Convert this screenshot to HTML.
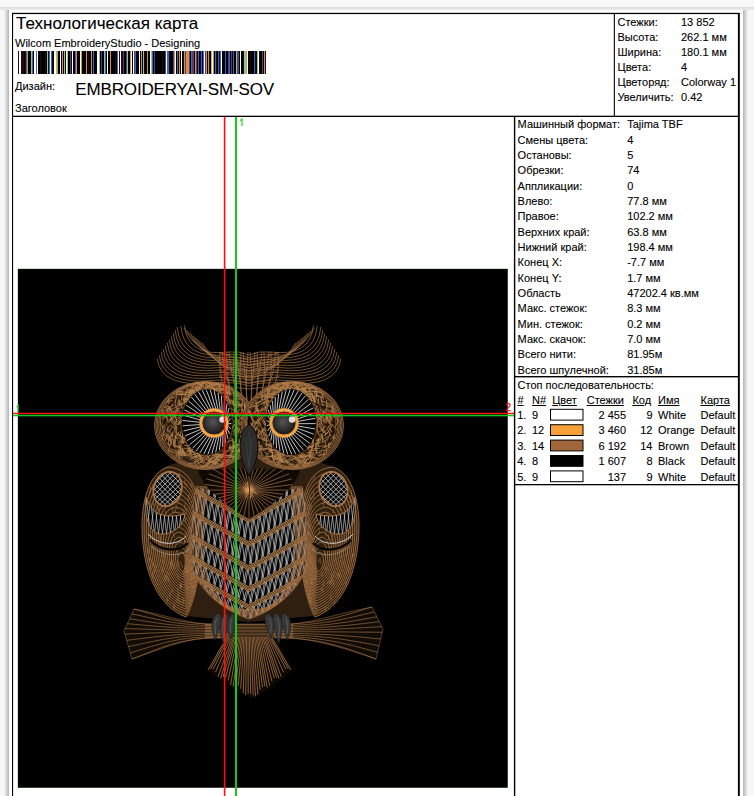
<!DOCTYPE html>
<html><head><meta charset="utf-8"><style>
html,body{margin:0;padding:0;}
body{width:754px;height:796px;overflow:hidden;background:#f7f7f7;position:relative;font-family:"Liberation Sans",sans-serif;}
.t{position:absolute;white-space:pre;color:#000;-webkit-text-stroke:0.1px #000;}
svg{position:absolute;left:0;top:0;}
</style></head><body>
<svg width="754" height="796" viewBox="0 0 754 796">
<defs>
<linearGradient id="shL" x1="0" x2="1" y1="0" y2="0"><stop offset="0" stop-color="#f7f7f7"/><stop offset="1" stop-color="#b4b4b4"/></linearGradient>
<linearGradient id="shR" x1="0" x2="1" y1="0" y2="0"><stop offset="0" stop-color="#b4b4b4"/><stop offset="1" stop-color="#f7f7f7"/></linearGradient>
<linearGradient id="shT" x1="0" x2="0" y1="0" y2="1"><stop offset="0" stop-color="#dcdcdc"/><stop offset="1" stop-color="#ececec"/></linearGradient>
</defs>
<rect x="0" y="7" width="754" height="3" fill="url(#shT)"/>
<rect x="4" y="10" width="5" height="786" fill="url(#shL)"/>
<rect x="743" y="10" width="5" height="786" fill="url(#shR)"/>
<rect x="9" y="10" width="734" height="786" fill="#fff"/>
<rect x="18" y="269" width="489.7" height="518.7" fill="#000" stroke="#203820" stroke-width="0.4"/>
<defs><radialGradient id="pupil" cx="0.45" cy="0.45" r="0.6"><stop offset="0" stop-color="#555"/><stop offset="1" stop-color="#151515"/></radialGradient></defs><g><path d="M134 609 C160 614 185 622 205 624 L293 624 C313 622 345 612 372 607 L383 629 L376 659 C350 650 318 640 293 638 L205 638 C182 640 158 650 132 659 L124 631Z" stroke="none" stroke-width="0" fill="#120c06" />
<path d="M134.0 609.0C164.0 616.8 175.0 624.5 230.0 624.5M372.0 607.0C342.0 615.8 323.0 624.5 268.0 624.5M205 624.5L293 624.5M131.8 613.9C161.8 619.9 175.0 625.9 230.0 625.9M374.4 611.9C344.4 618.9 323.0 625.9 268.0 625.9M205 625.9L293 625.9M129.6 618.8C159.6 623.1 175.0 627.4 230.0 627.4M376.9 616.8C346.9 622.1 323.0 627.4 268.0 627.4M205 627.4L293 627.4M127.3 623.7C157.3 626.2 175.0 628.8 230.0 628.8M379.3 621.7C349.3 625.2 323.0 628.8 268.0 628.8M205 628.8L293 628.8M125.1 628.6C155.1 629.4 175.0 630.3 230.0 630.3M381.8 626.6C351.8 628.4 323.0 630.3 268.0 630.3M205 630.3L293 630.3M124.9 634.1C154.9 632.9 175.0 631.7 230.0 631.7M382.2 632.3C352.2 632.0 323.0 631.7 268.0 631.7M205 631.7L293 631.7M126.7 640.3C156.7 636.8 175.0 633.2 230.0 633.2M380.7 639.0C350.7 636.1 323.0 633.2 268.0 633.2M205 633.2L293 633.2M128.4 646.6C158.4 640.6 175.0 634.6 230.0 634.6M379.1 645.7C349.1 640.1 323.0 634.6 268.0 634.6M205 634.6L293 634.6M130.2 652.8C160.2 644.4 175.0 636.1 230.0 636.1M377.6 652.3C347.6 644.2 323.0 636.1 268.0 636.1M205 636.1L293 636.1M132.0 659.0C162.0 648.2 175.0 637.5 230.0 637.5M376.0 659.0C346.0 648.2 323.0 637.5 268.0 637.5M205 637.5L293 637.5" stroke="#a87446" stroke-width="0.7" fill="none" opacity="0.9"/>
<path d="M134 609 C160 614 185 622 205 624 L293 624 C313 622 345 612 372 607 L383 629 L376 659 C350 650 318 640 293 638 L205 638 C182 640 158 650 132 659 L124 631Z" stroke="#a87446" stroke-width="0.6" fill="none" opacity="0.8" />
<path d="M226 637 L274 637 L293 668 C285 680 268 690 252 699 C236 690 218 680 208 670Z" stroke="none" stroke-width="0" fill="#0c0804" />
<path d="M227.0 637L208.0 670.0M228.3 637L210.5 668.8M229.6 637L213.0 669.3M230.9 637L215.5 672.1M232.3 637L218.1 676.6M233.6 637L220.6 678.3M234.9 637L223.1 677.1M236.2 637L225.6 677.6M237.5 637L228.1 680.4M238.8 637L230.6 684.9M240.1 637L233.1 686.6M241.5 637L235.7 685.4M242.8 637L238.2 685.9M244.1 637L240.7 688.7M245.4 637L243.2 693.2M246.7 637L245.7 694.9M248.0 637L248.2 693.7M249.3 637L250.7 694.2M250.7 637L253.2 695.3M252.0 637L255.5 696.3M253.3 637L257.9 694.6M254.6 637L260.2 690.0M255.9 637L262.5 687.0M257.2 637L264.9 686.4M258.5 637L267.2 687.5M259.9 637L269.6 685.7M261.2 637L271.9 681.1M262.5 637L274.3 678.2M263.8 637L276.6 677.6M265.1 637L278.9 678.6M266.4 637L281.3 676.9M267.7 637L283.6 672.3M269.1 637L286.0 669.3M270.4 637L288.3 668.7M271.7 637L290.7 669.8" stroke="#a87446" stroke-width="0.8" fill="none"/>
<path d="M249 458 C215 458 178 460 165 467 C148 478 143 510 145 535 C148 572 163 600 185 616 L249 622 L313 616 C335 600 351 572 353 535 C355 510 350 478 333 467 C320 460 283 458 249 458Z" stroke="none" stroke-width="0" fill="#2e1f10" />
<path d="M169.0 467.0C150.0 471.0 142.0 500.0 142.0 525.0C142.0 568.0 156.0 606.0 186.0 617.0C197.0 597.0 203.0 560.0 200.0 520.0C198.0 492.0 193.0 470.0 169.0 467.0" stroke="none" stroke-width="0" fill="#30200f" />
<clipPath id="wgL"><path d="M169.0 467.0C150.0 471.0 142.0 500.0 142.0 525.0C142.0 568.0 156.0 606.0 186.0 617.0C197.0 597.0 203.0 560.0 200.0 520.0C198.0 492.0 193.0 470.0 169.0 467.0"/></clipPath>
<path d="M169.0 467.0C150.0 471.0 142.0 500.0 142.0 525.0C142.0 568.0 156.0 606.0 186.0 617.0C197.0 597.0 203.0 560.0 200.0 520.0C198.0 492.0 193.0 470.0 169.0 467.0M169.7 472.0C151.7 475.8 144.1 503.3 144.1 527.0C144.1 567.8 157.4 603.9 185.8 614.3C196.3 595.4 202.0 560.3 199.1 522.3C197.2 495.7 192.5 474.9 169.7 472.0M170.4 477.0C153.4 480.6 146.2 506.6 146.2 529.1C146.2 567.7 158.8 601.8 185.7 611.7C195.6 593.7 201.0 560.5 198.3 524.6C196.5 499.5 192.0 479.7 170.4 477.0M171.1 482.0C155.1 485.4 148.3 510.0 148.3 531.1C148.3 567.5 160.1 599.7 185.5 609.0C194.9 592.1 199.9 560.8 197.4 526.9C195.7 503.2 191.5 484.6 171.1 482.0M171.9 487.0C156.7 490.2 150.4 513.3 150.4 533.2C150.4 567.4 161.5 597.6 185.4 606.4C194.1 590.5 198.9 561.0 196.5 529.2C194.9 506.9 191.0 489.4 171.9 487.0M172.6 492.0C158.4 495.0 152.5 516.6 152.5 535.2C152.5 567.2 162.9 595.5 185.2 603.7C193.4 588.8 197.9 561.3 195.7 531.5C194.2 510.7 190.4 494.3 172.6 492.0M173.3 497.1C160.1 499.8 154.6 519.9 154.6 537.3C154.6 567.1 164.3 593.4 185.1 601.1C192.7 587.2 196.9 561.5 194.8 533.8C193.4 514.4 189.9 499.1 173.3 497.1M174.0 502.1C161.8 504.6 156.7 523.3 156.7 539.3C156.7 566.9 165.7 591.3 184.9 598.4C192.0 585.6 195.8 561.8 193.9 536.1C192.6 518.1 189.4 504.0 174.0 502.1M174.7 507.1C163.5 509.4 158.8 526.6 158.8 541.4C158.8 566.8 167.0 589.2 184.8 595.7C191.3 583.9 194.8 562.0 193.0 538.4C191.9 521.8 188.9 508.8 174.7 507.1M175.4 512.1C165.2 514.2 160.9 529.9 160.9 543.4C160.9 566.6 168.4 587.1 184.6 593.1C190.6 582.3 193.8 562.3 192.2 540.7C191.1 525.6 188.4 513.7 175.4 512.1M176.2 517.1C166.9 519.0 163.0 533.2 163.0 545.4C163.0 566.5 169.8 585.0 184.5 590.4C189.8 580.6 192.8 562.6 191.3 543.0C190.3 529.3 187.9 518.6 176.2 517.1M176.9 522.1C168.6 523.8 165.1 536.5 165.1 547.5C165.1 566.3 171.2 582.9 184.3 587.8C189.1 579.0 191.8 562.8 190.4 545.3C189.6 533.0 187.4 523.4 176.9 522.1M177.6 527.1C170.2 528.7 167.1 539.9 167.1 549.5C167.1 566.2 172.6 580.9 184.2 585.1C188.4 577.4 190.7 563.1 189.6 547.6C188.8 536.8 186.9 528.3 177.6 527.1M178.3 532.1C171.9 533.5 169.2 543.2 169.2 551.6C169.2 566.0 173.9 578.8 184.0 582.4C187.7 575.7 189.7 563.3 188.7 549.9C188.0 540.5 186.4 533.1 178.3 532.1M179.0 537.1C173.6 538.3 171.3 546.5 171.3 553.6C171.3 565.9 175.3 576.7 183.9 579.8C187.0 574.1 188.7 563.6 187.8 552.2C187.3 544.2 185.8 538.0 179.0 537.1M179.7 542.1C175.3 543.1 173.4 549.8 173.4 555.7C173.4 565.7 176.7 574.6 183.7 577.1C186.3 572.5 187.7 563.8 187.0 554.5C186.5 548.0 185.3 542.8 179.7 542.1M180.4 547.1C177.0 547.9 175.5 553.2 175.5 557.7C175.5 565.5 178.1 572.5 183.5 574.5C185.6 570.8 186.6 564.1 186.1 556.8C185.7 551.7 184.8 547.7 180.4 547.1M181.2 552.2C178.7 552.7 177.6 556.5 177.6 559.8C177.6 565.4 179.5 570.4 183.4 571.8C184.8 569.2 185.6 564.3 185.2 559.1C185.0 555.4 184.3 552.5 181.2 552.2" stroke="#a87446" stroke-width="0.85" fill="none"/>
<path d="M175.8 503.8l1.1 5.3M150.5 558.9l2.8 5.7M159.4 506.8l-1.1 4.8M172.2 588.8l0.1 3.6M193.0 560.2l0.6 5.9M150.4 565.3l-0.3 5.4M148.6 512.8l-0.7 4.8M193.6 572.1l-0.2 6.7M189.4 526.1l1.1 6.7M158.5 489.3l-1.0 4.6M163.0 559.0l0.5 4.5M178.0 519.8l0.4 6.6M196.2 566.8l-0.9 6.9M155.6 565.3l-0.9 6.8M177.2 598.5l-0.1 3.8M177.4 588.1l0.9 3.1M199.5 591.3l2.5 5.7M155.0 528.3l1.6 5.9M149.4 557.3l-0.1 4.3M199.0 595.1l0.8 6.9M151.1 514.0l0.2 3.1M168.6 498.0l0.2 3.6M193.0 476.0l1.7 6.6M167.0 597.3l0.8 5.0M178.6 561.4l0.4 5.5M173.9 603.6l1.0 5.8M163.0 503.7l-1.1 5.0M147.6 547.9l1.0 5.2M179.6 472.8l0.1 3.2M171.7 559.1l-0.0 4.4M186.1 570.4l1.4 2.9M198.1 566.0l1.4 4.6M164.0 554.2l0.9 4.2M178.6 522.4l1.2 4.4M148.4 579.7l0.4 5.9M158.8 514.0l-0.4 3.9M170.1 496.6l-0.1 3.4M164.7 515.7l-0.5 4.7M181.5 517.8l-0.7 4.8M153.4 502.0l0.4 3.7M191.4 584.6l1.4 3.9M181.0 584.6l-0.4 4.4M162.5 488.4l-0.3 4.1M169.1 519.2l0.8 4.6M197.0 470.7l-1.0 6.9M197.4 531.7l-0.7 3.8M191.3 575.9l0.0 5.1M165.1 511.0l1.0 3.1M162.2 553.6l-0.3 3.2M183.8 598.3l-1.2 6.5M177.6 597.8l2.7 5.4M162.9 494.4l0.0 5.1M196.8 528.8l0.2 4.4M192.7 505.9l0.8 6.1M157.5 520.0l0.6 6.2M189.0 494.3l-1.1 6.1M192.7 559.3l1.7 3.7M174.9 508.1l0.9 4.8M147.1 580.3l1.5 3.2M150.6 487.7l-1.3 6.3M173.6 482.2l1.1 4.1M181.3 519.9l0.3 4.4M164.4 497.1l2.0 4.8M167.2 571.7l1.5 3.4M179.0 523.0l-0.3 4.5M180.0 583.8l0.8 4.4M184.3 540.5l1.0 5.7M160.0 535.4l0.6 5.8M169.5 480.2l1.1 6.4M166.8 603.0l-1.0 6.1M171.6 507.2l2.3 5.8M194.0 564.0l-0.5 5.7M176.9 574.2l2.1 4.9M149.3 580.0l1.3 3.1M191.6 473.3l2.4 5.9M191.3 565.6l-1.0 5.2M148.9 583.4l-0.3 5.0M152.7 571.6l-0.4 6.7M164.2 478.7l0.5 6.3M156.5 504.4l1.6 5.2M167.9 577.0l1.0 4.5M169.2 519.7l2.0 4.6M168.9 608.2l-0.2 3.6M187.1 568.1l-0.0 5.1M181.1 538.7l-0.6 3.6M186.7 483.6l-0.9 5.0M185.1 532.9l1.4 3.8M178.0 498.3l1.0 3.8M197.5 568.1l1.5 5.6M192.2 528.7l0.3 4.1M148.2 500.9l0.6 4.5M166.1 494.5l1.5 5.9M199.5 490.4l0.7 5.3M191.2 536.5l-0.5 5.2M185.2 538.3l-0.6 4.6M197.9 574.2l0.6 3.9M185.0 503.3l-0.0 6.8M160.7 496.9l1.9 5.5M194.7 591.9l1.9 6.2M169.4 514.5l-0.1 3.3M191.2 483.2l1.2 4.3M182.8 552.4l1.9 3.9M172.8 531.9l1.7 5.1M167.7 605.7l0.3 3.5M182.3 509.0l2.5 6.1M166.8 603.7l-0.4 6.0M182.8 512.0l0.1 6.2M187.0 507.7l-1.1 5.6M153.0 546.1l0.5 4.4M183.0 572.0l0.3 3.7M180.4 561.7l2.2 6.2M153.5 563.1l-0.6 3.5M185.2 517.1l0.3 5.2M171.3 561.9l0.9 3.6M184.9 479.7l-0.3 5.2M166.0 575.0l1.3 4.4M160.1 541.7l-0.3 4.4M168.4 517.3l0.6 6.1M191.9 520.1l1.6 3.8M153.0 484.2l-0.4 5.9M157.0 496.2l1.1 5.9M186.7 585.8l0.2 3.6M157.3 526.6l0.5 5.2M160.3 498.7l-0.2 3.1M194.2 584.0l-0.9 4.4M177.9 548.5l0.2 6.9M162.9 567.5l-0.6 4.9M185.5 555.4l2.7 5.4M173.1 564.0l0.5 4.8M175.1 497.5l2.2 4.5M170.5 561.7l0.5 6.8M180.0 582.5l1.9 4.0M151.1 503.1l0.6 6.7M193.1 515.9l-0.1 3.5M178.9 591.9l-1.0 5.8M165.2 575.0l-0.6 6.7M170.2 592.3l-0.3 4.9M149.3 485.5l1.5 3.5M173.3 492.8l-0.1 5.1" stroke="#b8854f" stroke-width="0.6" fill="none" opacity="0.8" clip-path="url(#wgL)"/>
<path d="M153.8 489.0a13.8 17.5 0 1 0 27.6 0a13.8 17.5 0 1 0 -27.6 0Z" fill="#050505" transform="rotate(18 167.6 489)"/>
<clipPath id="ovL"><path d="M153.8 489.0a13.8 17.5 0 1 0 27.6 0a13.8 17.5 0 1 0 -27.6 0Z" transform="rotate(18 167.6 489)"/></clipPath>
<path d="M114.4 469.0Q134.4 491.0 158.4 513.0M158.4 469.0Q138.4 491.0 114.4 513.0M119.6 469.0Q139.6 491.0 163.6 513.0M163.6 469.0Q143.6 491.0 119.6 513.0M124.8 469.0Q144.8 491.0 168.8 513.0M168.8 469.0Q148.8 491.0 124.8 513.0M130.0 469.0Q150.0 491.0 174.0 513.0M174.0 469.0Q154.0 491.0 130.0 513.0M135.2 469.0Q155.2 491.0 179.2 513.0M179.2 469.0Q159.2 491.0 135.2 513.0M140.4 469.0Q160.4 491.0 184.4 513.0M184.4 469.0Q164.4 491.0 140.4 513.0M145.6 469.0Q165.6 491.0 189.6 513.0M189.6 469.0Q169.6 491.0 145.6 513.0M150.8 469.0Q170.8 491.0 194.8 513.0M194.8 469.0Q174.8 491.0 150.8 513.0M156.0 469.0Q176.0 491.0 200.0 513.0M200.0 469.0Q180.0 491.0 156.0 513.0M161.2 469.0Q181.2 491.0 205.2 513.0M205.2 469.0Q185.2 491.0 161.2 513.0M166.4 469.0Q186.4 491.0 210.4 513.0M210.4 469.0Q190.4 491.0 166.4 513.0M171.6 469.0Q191.6 491.0 215.6 513.0M215.6 469.0Q195.6 491.0 171.6 513.0M176.8 469.0Q196.8 491.0 220.8 513.0M220.8 469.0Q200.8 491.0 176.8 513.0" stroke="#dadada" stroke-width="0.75" fill="none" clip-path="url(#ovL)"/>
<path d="M153.8 489.0a13.8 17.5 0 1 0 27.6 0a13.8 17.5 0 1 0 -27.6 0Z" fill="none" stroke="#a87446" stroke-width="1.8" transform="rotate(18 167.6 489)"/>
<path d="M146 497 C149 512 163 520 185 514 C184 524 175 535 160 534 C150 532 144 520 146 497Z" stroke="none" stroke-width="0" fill="#050505" />
<clipPath id="crL"><path d="M146 497 C149 512 163 520 185 514 C184 524 175 535 160 534 C150 532 144 520 146 497Z"/></clipPath>
<path d="M142.0 496L147.0 538M147.0 496L142.0 538M146.0 496L151.0 538M151.0 496L146.0 538M150.0 496L155.0 538M155.0 496L150.0 538M154.0 496L159.0 538M159.0 496L154.0 538M158.0 496L163.0 538M163.0 496L158.0 538M162.0 496L167.0 538M167.0 496L162.0 538M166.0 496L171.0 538M171.0 496L166.0 538M170.0 496L175.0 538M175.0 496L170.0 538M174.0 496L179.0 538M179.0 496L174.0 538M178.0 496L183.0 538M183.0 496L178.0 538M182.0 496L187.0 538M187.0 496L182.0 538M186.0 496L191.0 538M191.0 496L186.0 538" stroke="#d0d0d0" stroke-width="0.65" fill="none" clip-path="url(#crL)"/>
<path d="M146 497 C149 512 163 520 185 514 C184 524 175 535 160 534 C150 532 144 520 146 497Z" stroke="#a87446" stroke-width="1.0" fill="none"/>
<path d="M148.0 534 C158.0 545 176.0 547 186.0 536" stroke="#dddddd" stroke-width="1.0" fill="none" opacity="0.9"/>
<path d="M150.0 540 C160.0 551 178.0 553 188.0 543" stroke="#080808" stroke-width="2.4" fill="none"/>
<path d="M151.0 546 C162.0 556 180.0 558 189.0 549" stroke="#b0b0b0" stroke-width="0.7" fill="none" opacity="0.8"/>
<path d="M332.0 467.0C351.0 471.0 359.0 500.0 359.0 525.0C359.0 568.0 345.0 606.0 315.0 617.0C304.0 597.0 298.0 560.0 301.0 520.0C303.0 492.0 308.0 470.0 332.0 467.0" stroke="none" stroke-width="0" fill="#30200f" />
<clipPath id="wgR"><path d="M332.0 467.0C351.0 471.0 359.0 500.0 359.0 525.0C359.0 568.0 345.0 606.0 315.0 617.0C304.0 597.0 298.0 560.0 301.0 520.0C303.0 492.0 308.0 470.0 332.0 467.0"/></clipPath>
<path d="M332.0 467.0C351.0 471.0 359.0 500.0 359.0 525.0C359.0 568.0 345.0 606.0 315.0 617.0C304.0 597.0 298.0 560.0 301.0 520.0C303.0 492.0 308.0 470.0 332.0 467.0M331.3 472.0C349.3 475.8 356.9 503.3 356.9 527.0C356.9 567.8 343.6 603.9 315.2 614.3C304.7 595.4 299.0 560.3 301.9 522.3C303.8 495.7 308.5 474.9 331.3 472.0M330.6 477.0C347.6 480.6 354.8 506.6 354.8 529.1C354.8 567.7 342.2 601.8 315.3 611.7C305.4 593.7 300.0 560.5 302.7 524.6C304.5 499.5 309.0 479.7 330.6 477.0M329.9 482.0C345.9 485.4 352.7 510.0 352.7 531.1C352.7 567.5 340.9 599.7 315.5 609.0C306.1 592.1 301.1 560.8 303.6 526.9C305.3 503.2 309.5 484.6 329.9 482.0M329.1 487.0C344.3 490.2 350.6 513.3 350.6 533.2C350.6 567.4 339.5 597.6 315.6 606.4C306.9 590.5 302.1 561.0 304.5 529.2C306.1 506.9 310.0 489.4 329.1 487.0M328.4 492.0C342.6 495.0 348.5 516.6 348.5 535.2C348.5 567.2 338.1 595.5 315.8 603.7C307.6 588.8 303.1 561.3 305.3 531.5C306.8 510.7 310.6 494.3 328.4 492.0M327.7 497.1C340.9 499.8 346.4 519.9 346.4 537.3C346.4 567.1 336.7 593.4 315.9 601.1C308.3 587.2 304.1 561.5 306.2 533.8C307.6 514.4 311.1 499.1 327.7 497.1M327.0 502.1C339.2 504.6 344.3 523.3 344.3 539.3C344.3 566.9 335.3 591.3 316.1 598.4C309.0 585.6 305.2 561.8 307.1 536.1C308.4 518.1 311.6 504.0 327.0 502.1M326.3 507.1C337.5 509.4 342.2 526.6 342.2 541.4C342.2 566.8 334.0 589.2 316.2 595.7C309.7 583.9 306.2 562.0 308.0 538.4C309.1 521.8 312.1 508.8 326.3 507.1M325.6 512.1C335.8 514.2 340.1 529.9 340.1 543.4C340.1 566.6 332.6 587.1 316.4 593.1C310.4 582.3 307.2 562.3 308.8 540.7C309.9 525.6 312.6 513.7 325.6 512.1M324.8 517.1C334.1 519.0 338.0 533.2 338.0 545.4C338.0 566.5 331.2 585.0 316.5 590.4C311.2 580.6 308.2 562.6 309.7 543.0C310.7 529.3 313.1 518.6 324.8 517.1M324.1 522.1C332.4 523.8 335.9 536.5 335.9 547.5C335.9 566.3 329.8 582.9 316.7 587.8C311.9 579.0 309.2 562.8 310.6 545.3C311.4 533.0 313.6 523.4 324.1 522.1M323.4 527.1C330.8 528.7 333.9 539.9 333.9 549.5C333.9 566.2 328.4 580.9 316.8 585.1C312.6 577.4 310.3 563.1 311.4 547.6C312.2 536.8 314.1 528.3 323.4 527.1M322.7 532.1C329.1 533.5 331.8 543.2 331.8 551.6C331.8 566.0 327.1 578.8 317.0 582.4C313.3 575.7 311.3 563.3 312.3 549.9C313.0 540.5 314.6 533.1 322.7 532.1M322.0 537.1C327.4 538.3 329.7 546.5 329.7 553.6C329.7 565.9 325.7 576.7 317.1 579.8C314.0 574.1 312.3 563.6 313.2 552.2C313.7 544.2 315.2 538.0 322.0 537.1M321.3 542.1C325.7 543.1 327.6 549.8 327.6 555.7C327.6 565.7 324.3 574.6 317.3 577.1C314.7 572.5 313.3 563.8 314.0 554.5C314.5 548.0 315.7 542.8 321.3 542.1M320.6 547.1C324.0 547.9 325.5 553.2 325.5 557.7C325.5 565.5 322.9 572.5 317.5 574.5C315.4 570.8 314.4 564.1 314.9 556.8C315.3 551.7 316.2 547.7 320.6 547.1M319.8 552.2C322.3 552.7 323.4 556.5 323.4 559.8C323.4 565.4 321.5 570.4 317.6 571.8C316.2 569.2 315.4 564.3 315.8 559.1C316.0 555.4 316.7 552.5 319.8 552.2" stroke="#a87446" stroke-width="0.85" fill="none"/>
<path d="M319.6 529.9l-1.2 4.7M332.7 577.5l-2.2 6.2M334.6 572.2l-1.1 5.0M342.1 554.7l-1.7 3.4M346.4 581.2l-0.6 3.7M344.9 499.7l-0.7 3.6M328.0 493.9l-1.3 2.8M332.4 533.6l0.1 3.2M333.0 527.3l-3.0 6.2M349.0 501.1l-0.5 3.6M335.6 558.4l-1.2 3.0M339.4 573.3l0.4 4.8M339.9 505.5l0.5 5.5M349.0 519.0l0.0 6.9M353.8 554.1l-1.5 3.0M352.1 494.2l-2.4 5.1M328.7 608.3l0.6 6.6M321.8 513.3l0.6 3.3M309.0 511.7l-1.7 4.2M318.0 517.5l0.7 3.6M315.1 575.1l0.6 5.2M334.8 601.1l-0.7 3.9M328.5 580.7l-1.0 3.5M321.9 572.3l0.1 4.5M345.8 539.2l0.1 3.1M313.8 536.3l0.0 3.4M309.3 503.7l-0.1 6.5M330.2 593.9l0.9 5.9M334.4 517.4l-1.9 4.2M348.2 550.8l-2.3 5.1M351.4 504.2l-2.0 5.2M353.4 553.1l-2.1 6.5M324.2 501.3l-1.1 6.0M312.2 555.8l-0.4 3.7M349.8 495.2l0.4 3.4M302.8 473.4l-2.1 6.2M329.3 482.2l-2.0 6.0M320.0 557.4l0.4 6.5M322.0 519.1l-0.5 3.4M322.5 588.6l0.4 3.8M329.4 546.6l0.1 3.3M328.3 519.2l-2.1 4.8M331.6 574.4l-0.1 5.4M335.4 500.4l1.0 4.2M349.5 531.2l-1.1 3.5M315.5 602.2l1.0 6.9M304.6 556.9l-0.4 4.7M306.1 604.6l1.0 4.8M332.4 579.8l1.5 6.5M304.5 511.5l-1.1 3.2M338.4 572.6l-0.6 5.5M314.5 475.8l-1.3 4.5M314.7 519.0l0.2 4.1M338.1 484.7l-0.6 3.3M313.6 491.8l0.1 6.9M307.6 609.1l-0.8 3.6M329.5 514.3l-0.5 5.1M308.8 521.1l-1.3 4.7M311.2 595.9l-1.0 3.8M353.5 584.5l-1.9 4.8M345.2 546.1l-1.6 3.5M329.3 579.3l1.3 6.0M353.3 496.3l-0.7 4.3M325.1 477.3l-1.7 3.9M311.5 505.1l-0.7 4.0M331.2 476.2l-0.2 5.7M311.1 599.6l-1.0 3.4M312.2 577.7l-0.7 6.3M339.2 548.4l-1.1 2.9M306.5 561.3l0.8 4.8M304.8 564.5l0.5 5.4M326.5 528.8l-1.3 3.5M301.4 567.1l-0.4 4.6M329.9 520.0l0.4 4.8M326.3 514.7l-1.2 6.3M304.6 587.5l-0.1 3.1M324.9 551.6l-0.5 4.1M305.7 570.7l-2.2 5.2M326.7 522.7l1.1 6.8M343.7 561.4l0.6 3.7M310.1 524.4l-1.0 4.0M304.0 604.9l-1.1 4.4M347.0 510.0l-2.0 6.6M341.8 481.3l-1.1 3.1M314.6 544.7l0.6 5.5M303.1 510.1l-1.7 3.7M339.8 538.6l-0.3 3.2M303.2 503.5l-2.4 6.2M301.4 495.3l0.0 5.6M351.1 490.2l0.2 3.7M310.4 496.9l0.5 3.2M325.7 606.4l-0.7 3.4M301.7 525.4l-1.0 3.4M347.3 490.6l-1.5 6.5M343.8 480.9l1.3 6.9M303.6 520.3l-0.8 5.8M352.9 514.5l-1.4 5.8M323.8 581.0l-0.7 5.1M325.7 532.8l0.4 3.8M304.6 554.4l0.5 3.7M309.5 606.8l-1.4 3.8M351.2 498.7l1.0 4.5M307.9 472.0l0.6 6.9M326.2 567.3l0.2 3.4M330.6 546.7l-1.9 5.0M327.2 515.9l-0.9 4.2M322.1 520.9l1.4 6.6M309.7 592.4l-1.8 6.7M347.5 508.3l-0.7 5.9M319.8 518.4l-1.9 6.6M328.7 534.3l-0.6 6.5M326.0 610.1l-0.9 5.4M331.4 479.8l0.7 6.1M308.7 478.4l-1.4 6.8M342.6 522.1l-0.6 6.5M308.0 531.2l0.1 4.4M327.2 512.7l-0.9 4.4M307.6 562.5l-0.2 3.6M334.3 501.2l-0.1 3.6M337.0 481.6l-0.8 3.0M305.2 546.5l-0.6 5.9M309.6 587.6l0.8 4.7M347.6 566.9l0.7 4.5M306.8 537.5l-1.0 3.6M322.3 586.9l-1.2 2.9M353.6 519.9l0.4 3.7M333.4 508.9l-0.5 4.7M319.0 559.3l-0.6 3.3M317.4 609.0l-1.9 4.4M301.4 577.0l-1.3 2.8M331.6 538.2l1.0 6.2M331.8 517.1l-0.4 6.5M333.2 498.7l-2.2 5.1M304.4 473.8l-0.6 5.3M341.7 482.1l-0.9 6.4M338.9 546.5l1.2 5.5M343.3 545.0l-1.7 6.4M325.8 488.9l-0.2 4.4M305.8 579.2l0.8 5.9M350.8 498.9l-0.7 4.2" stroke="#b8854f" stroke-width="0.6" fill="none" opacity="0.8" clip-path="url(#wgR)"/>
<path d="M319.6 489.0a13.8 17.5 0 1 0 27.6 0a13.8 17.5 0 1 0 -27.6 0Z" fill="#050505" transform="rotate(-18 333.4 489)"/>
<clipPath id="ovR"><path d="M319.6 489.0a13.8 17.5 0 1 0 27.6 0a13.8 17.5 0 1 0 -27.6 0Z" transform="rotate(-18 333.4 489)"/></clipPath>
<path d="M280.2 469.0Q300.2 491.0 324.2 513.0M324.2 469.0Q304.2 491.0 280.2 513.0M285.4 469.0Q305.4 491.0 329.4 513.0M329.4 469.0Q309.4 491.0 285.4 513.0M290.6 469.0Q310.6 491.0 334.6 513.0M334.6 469.0Q314.6 491.0 290.6 513.0M295.8 469.0Q315.8 491.0 339.8 513.0M339.8 469.0Q319.8 491.0 295.8 513.0M301.0 469.0Q321.0 491.0 345.0 513.0M345.0 469.0Q325.0 491.0 301.0 513.0M306.2 469.0Q326.2 491.0 350.2 513.0M350.2 469.0Q330.2 491.0 306.2 513.0M311.4 469.0Q331.4 491.0 355.4 513.0M355.4 469.0Q335.4 491.0 311.4 513.0M316.6 469.0Q336.6 491.0 360.6 513.0M360.6 469.0Q340.6 491.0 316.6 513.0M321.8 469.0Q341.8 491.0 365.8 513.0M365.8 469.0Q345.8 491.0 321.8 513.0M327.0 469.0Q347.0 491.0 371.0 513.0M371.0 469.0Q351.0 491.0 327.0 513.0M332.2 469.0Q352.2 491.0 376.2 513.0M376.2 469.0Q356.2 491.0 332.2 513.0M337.4 469.0Q357.4 491.0 381.4 513.0M381.4 469.0Q361.4 491.0 337.4 513.0M342.6 469.0Q362.6 491.0 386.6 513.0M386.6 469.0Q366.6 491.0 342.6 513.0" stroke="#dadada" stroke-width="0.75" fill="none" clip-path="url(#ovR)"/>
<path d="M319.6 489.0a13.8 17.5 0 1 0 27.6 0a13.8 17.5 0 1 0 -27.6 0Z" fill="none" stroke="#a87446" stroke-width="1.8" transform="rotate(-18 333.4 489)"/>
<path d="M 355.0 497.0 C 352.0 512.0 338.0 520.0 316.0 514.0 C 317.0 524.0 326.0 535.0 341.0 534.0 C 351.0 532.0 357.0 520.0 355.0 497.0 Z" stroke="none" stroke-width="0" fill="#050505" />
<clipPath id="crR"><path d="M 355.0 497.0 C 352.0 512.0 338.0 520.0 316.0 514.0 C 317.0 524.0 326.0 535.0 341.0 534.0 C 351.0 532.0 357.0 520.0 355.0 497.0 Z"/></clipPath>
<path d="M359.0 496L354.0 538M354.0 496L359.0 538M355.0 496L350.0 538M350.0 496L355.0 538M351.0 496L346.0 538M346.0 496L351.0 538M347.0 496L342.0 538M342.0 496L347.0 538M343.0 496L338.0 538M338.0 496L343.0 538M339.0 496L334.0 538M334.0 496L339.0 538M335.0 496L330.0 538M330.0 496L335.0 538M331.0 496L326.0 538M326.0 496L331.0 538M327.0 496L322.0 538M322.0 496L327.0 538M323.0 496L318.0 538M318.0 496L323.0 538M319.0 496L314.0 538M314.0 496L319.0 538M315.0 496L310.0 538M310.0 496L315.0 538" stroke="#d0d0d0" stroke-width="0.65" fill="none" clip-path="url(#crR)"/>
<path d="M 355.0 497.0 C 352.0 512.0 338.0 520.0 316.0 514.0 C 317.0 524.0 326.0 535.0 341.0 534.0 C 351.0 532.0 357.0 520.0 355.0 497.0 Z" stroke="#a87446" stroke-width="1.0" fill="none"/>
<path d="M353.0 534 C343.0 545 325.0 547 315.0 536" stroke="#dddddd" stroke-width="1.0" fill="none" opacity="0.9"/>
<path d="M351.0 540 C341.0 551 323.0 553 313.0 543" stroke="#080808" stroke-width="2.4" fill="none"/>
<path d="M350.0 546 C339.0 556 321.0 558 312.0 549" stroke="#b0b0b0" stroke-width="0.7" fill="none" opacity="0.8"/>
<path d="M196 488 C220 490 235 498 249 503 C263 498 278 490 303 488 C308 520 308 555 304 572 C294 595 272 610 249 619 C226 610 204 595 194 572 C190 555 190 520 196 488Z" stroke="none" stroke-width="0" fill="#050505" />
<clipPath id="shield"><path d="M196 488 C220 490 235 498 249 503 C263 498 278 490 303 488 C308 520 308 555 304 572 C294 595 272 610 249 619 C226 610 204 595 194 572 C190 555 190 520 196 488Z"/></clipPath>
<path d="M188.0 462.4L191.0 485.1L194.0 465.8M189.5 483.4L192.5 465.8M194.0 465.8L197.0 488.4L200.0 469.1M195.5 486.8L198.5 469.1M200.0 469.1L203.0 491.7L206.0 472.4M201.5 490.1L204.5 472.4M206.0 472.4L209.0 495.0L212.0 475.6M207.5 493.4L210.5 475.6M212.0 475.6L215.0 498.3L218.0 478.9M213.5 496.6L216.5 478.9M218.0 478.9L221.0 501.6L224.0 482.2M219.5 499.9L222.5 482.2M224.0 482.2L227.0 504.9L230.0 485.6M225.5 503.2L228.5 485.6M230.0 485.6L233.0 508.2L236.0 488.9M231.5 506.6L234.5 488.9M236.0 488.9L239.0 511.5L242.0 492.1M237.5 509.9L240.5 492.1M242.0 492.1L245.0 514.8L248.0 495.4M243.5 513.1L246.5 495.4M248.0 495.4L251.0 515.9L254.0 493.2M249.5 516.5L252.5 493.2M254.0 493.2L257.0 512.6L260.0 489.9M255.5 514.2L258.5 489.9M260.0 489.9L263.0 509.3L266.0 486.6M261.5 510.9L264.5 486.6M266.0 486.6L269.0 506.0L272.0 483.4M267.5 507.6L270.5 483.4M272.0 483.4L275.0 502.7L278.0 480.1M273.5 504.4L276.5 480.1M278.0 480.1L281.0 499.4L284.0 476.8M279.5 501.1L282.5 476.8M284.0 476.8L287.0 496.1L290.0 473.4M285.5 497.8L288.5 473.4M290.0 473.4L293.0 492.8L296.0 470.1M291.5 494.4L294.5 470.1M296.0 470.1L299.0 489.5L302.0 466.9M297.5 491.1L300.5 466.9M302.0 466.9L305.0 486.2L308.0 463.6M303.5 487.9L306.5 463.6M308.0 463.6L311.0 482.9L314.0 460.2M309.5 484.6L312.5 460.2M188.0 488.4L191.0 509.1L194.0 491.8M189.5 507.4L192.5 491.8M194.0 491.8L197.0 512.4L200.0 495.1M195.5 510.8L198.5 495.1M200.0 495.1L203.0 515.7L206.0 498.4M201.5 514.0L204.5 498.4M206.0 498.4L209.0 519.0L212.0 501.6M207.5 517.4L210.5 501.6M212.0 501.6L215.0 522.3L218.0 504.9M213.5 520.6L216.5 504.9M218.0 504.9L221.0 525.6L224.0 508.2M219.5 524.0L222.5 508.2M224.0 508.2L227.0 528.9L230.0 511.6M225.5 527.2L228.5 511.6M230.0 511.6L233.0 532.2L236.0 514.9M231.5 530.5L234.5 514.9M236.0 514.9L239.0 535.5L242.0 518.1M237.5 533.9L240.5 518.1M242.0 518.1L245.0 538.8L248.0 521.5M243.5 537.1L246.5 521.5M248.0 521.5L251.0 539.9L254.0 519.2M249.5 540.5L252.5 519.2M254.0 519.2L257.0 536.6L260.0 516.0M255.5 538.2L258.5 516.0M260.0 516.0L263.0 533.3L266.0 512.6M261.5 535.0L264.5 512.6M266.0 512.6L269.0 530.0L272.0 509.4M267.5 531.6L270.5 509.4M272.0 509.4L275.0 526.7L278.0 506.1M273.5 528.4L276.5 506.1M278.0 506.1L281.0 523.4L284.0 502.8M279.5 525.0L282.5 502.8M284.0 502.8L287.0 520.1L290.0 499.4M285.5 521.8L288.5 499.4M290.0 499.4L293.0 516.8L296.0 496.1M291.5 518.5L294.5 496.1M296.0 496.1L299.0 513.5L302.0 492.9M297.5 515.1L300.5 492.9M302.0 492.9L305.0 510.2L308.0 489.6M303.5 511.9L306.5 489.6M308.0 489.6L311.0 506.9L314.0 486.2M309.5 508.6L312.5 486.2M188.0 512.5L191.0 533.1L194.0 515.8M189.5 531.5L192.5 515.8M194.0 515.8L197.0 536.4L200.0 519.0M195.5 534.8L198.5 519.0M200.0 519.0L203.0 539.7L206.0 522.4M201.5 538.0L204.5 522.4M206.0 522.4L209.0 543.0L212.0 525.6M207.5 541.4L210.5 525.6M212.0 525.6L215.0 546.3L218.0 529.0M213.5 544.6L216.5 529.0M218.0 529.0L221.0 549.6L224.0 532.2M219.5 548.0L222.5 532.2M224.0 532.2L227.0 552.9L230.0 535.5M225.5 551.2L228.5 535.5M230.0 535.5L233.0 556.2L236.0 538.9M231.5 554.5L234.5 538.9M236.0 538.9L239.0 559.5L242.0 542.1M237.5 557.9L240.5 542.1M242.0 542.1L245.0 562.8L248.0 545.5M243.5 561.1L246.5 545.5M248.0 545.5L251.0 563.9L254.0 543.2M249.5 564.5L252.5 543.2M254.0 543.2L257.0 560.6L260.0 540.0M255.5 562.2L258.5 540.0M260.0 540.0L263.0 557.3L266.0 536.6M261.5 559.0L264.5 536.6M266.0 536.6L269.0 554.0L272.0 533.4M267.5 555.6L270.5 533.4M272.0 533.4L275.0 550.7L278.0 530.0M273.5 552.4L276.5 530.0M278.0 530.0L281.0 547.4L284.0 526.8M279.5 549.0L282.5 526.8M284.0 526.8L287.0 544.1L290.0 523.5M285.5 545.8L288.5 523.5M290.0 523.5L293.0 540.8L296.0 520.1M291.5 542.5L294.5 520.1M296.0 520.1L299.0 537.5L302.0 516.9M297.5 539.1L300.5 516.9M302.0 516.9L305.0 534.2L308.0 513.5M303.5 535.9L306.5 513.5M308.0 513.5L311.0 530.9L314.0 510.2M309.5 532.5L312.5 510.2M188.0 536.5L191.0 554.1L194.0 539.8M189.5 552.5L192.5 539.8M194.0 539.8L197.0 557.4L200.0 543.0M195.5 555.8L198.5 543.0M200.0 543.0L203.0 560.7L206.0 546.4M201.5 559.0L204.5 546.4M206.0 546.4L209.0 564.0L212.0 549.6M207.5 562.4L210.5 549.6M212.0 549.6L215.0 567.3L218.0 553.0M213.5 565.6L216.5 553.0M218.0 553.0L221.0 570.6L224.0 556.2M219.5 569.0L222.5 556.2M224.0 556.2L227.0 573.9L230.0 559.5M225.5 572.2L228.5 559.5M230.0 559.5L233.0 577.2L236.0 562.9M231.5 575.5L234.5 562.9M236.0 562.9L239.0 580.5L242.0 566.1M237.5 578.9L240.5 566.1M242.0 566.1L245.0 583.8L248.0 569.5M243.5 582.1L246.5 569.5M248.0 569.5L251.0 584.9L254.0 567.2M249.5 585.5L252.5 567.2M254.0 567.2L257.0 581.6L260.0 564.0M255.5 583.2L258.5 564.0M260.0 564.0L263.0 578.3L266.0 560.6M261.5 580.0L264.5 560.6M266.0 560.6L269.0 575.0L272.0 557.4M267.5 576.6L270.5 557.4M272.0 557.4L275.0 571.7L278.0 554.0M273.5 573.4L276.5 554.0M278.0 554.0L281.0 568.4L284.0 550.8M279.5 570.0L282.5 550.8M284.0 550.8L287.0 565.1L290.0 547.5M285.5 566.8L288.5 547.5M290.0 547.5L293.0 561.8L296.0 544.1M291.5 563.5L294.5 544.1M296.0 544.1L299.0 558.5L302.0 540.9M297.5 560.1L300.5 540.9M302.0 540.9L305.0 555.2L308.0 537.5M303.5 556.9L306.5 537.5M308.0 537.5L311.0 551.9L314.0 534.2M309.5 553.5L312.5 534.2M188.0 557.5L191.0 572.1L194.0 560.8M189.5 570.5L192.5 560.8M194.0 560.8L197.0 575.4L200.0 564.0M195.5 573.8L198.5 564.0M200.0 564.0L203.0 578.7L206.0 567.4M201.5 577.0L204.5 567.4M206.0 567.4L209.0 582.0L212.0 570.6M207.5 580.4L210.5 570.6M212.0 570.6L215.0 585.3L218.0 574.0M213.5 583.6L216.5 574.0M218.0 574.0L221.0 588.6L224.0 577.2M219.5 587.0L222.5 577.2M224.0 577.2L227.0 591.9L230.0 580.5M225.5 590.2L228.5 580.5M230.0 580.5L233.0 595.2L236.0 583.9M231.5 593.5L234.5 583.9M236.0 583.9L239.0 598.5L242.0 587.1M237.5 596.9L240.5 587.1M242.0 587.1L245.0 601.8L248.0 590.5M243.5 600.1L246.5 590.5M248.0 590.5L251.0 602.9L254.0 588.2M249.5 603.5L252.5 588.2M254.0 588.2L257.0 599.6L260.0 585.0M255.5 601.2L258.5 585.0M260.0 585.0L263.0 596.3L266.0 581.6M261.5 598.0L264.5 581.6M266.0 581.6L269.0 593.0L272.0 578.4M267.5 594.6L270.5 578.4M272.0 578.4L275.0 589.7L278.0 575.0M273.5 591.4L276.5 575.0M278.0 575.0L281.0 586.4L284.0 571.8M279.5 588.0L282.5 571.8M284.0 571.8L287.0 583.1L290.0 568.5M285.5 584.8L288.5 568.5M290.0 568.5L293.0 579.8L296.0 565.1M291.5 581.5L294.5 565.1M296.0 565.1L299.0 576.5L302.0 561.9M297.5 578.1L300.5 561.9M302.0 561.9L305.0 573.2L308.0 558.5M303.5 574.9L306.5 558.5M308.0 558.5L311.0 569.9L314.0 555.2M309.5 571.5L312.5 555.2M188.0 575.5L191.0 588.1L194.0 578.8M189.5 586.5L192.5 578.8M194.0 578.8L197.0 591.4L200.0 582.0M195.5 589.8L198.5 582.0M200.0 582.0L203.0 594.7L206.0 585.4M201.5 593.0L204.5 585.4M206.0 585.4L209.0 598.0L212.0 588.6M207.5 596.4L210.5 588.6M212.0 588.6L215.0 601.3L218.0 592.0M213.5 599.6L216.5 592.0M218.0 592.0L221.0 604.6L224.0 595.2M219.5 603.0L222.5 595.2M224.0 595.2L227.0 607.9L230.0 598.5M225.5 606.2L228.5 598.5M230.0 598.5L233.0 611.2L236.0 601.9M231.5 609.5L234.5 601.9M236.0 601.9L239.0 614.5L242.0 605.1M237.5 612.9L240.5 605.1M242.0 605.1L245.0 617.8L248.0 608.5M243.5 616.1L246.5 608.5M248.0 608.5L251.0 618.9L254.0 606.2M249.5 619.5L252.5 606.2M254.0 606.2L257.0 615.6L260.0 603.0M255.5 617.2L258.5 603.0M260.0 603.0L263.0 612.3L266.0 599.6M261.5 614.0L264.5 599.6M266.0 599.6L269.0 609.0L272.0 596.4M267.5 610.6L270.5 596.4M272.0 596.4L275.0 605.7L278.0 593.0M273.5 607.4L276.5 593.0M278.0 593.0L281.0 602.4L284.0 589.8M279.5 604.0L282.5 589.8M284.0 589.8L287.0 599.1L290.0 586.5M285.5 600.8L288.5 586.5M290.0 586.5L293.0 595.8L296.0 583.1M291.5 597.5L294.5 583.1M296.0 583.1L299.0 592.5L302.0 579.9M297.5 594.1L300.5 579.9M302.0 579.9L305.0 589.2L308.0 576.5M303.5 590.9L306.5 576.5M308.0 576.5L311.0 585.9L314.0 573.2M309.5 587.5L312.5 573.2" stroke="#d0d0d0" stroke-width="0.7" fill="none" clip-path="url(#shield)"/>
<path d="M180 480.1L249 518.0L318 480.1M180 481.6L249 519.5L318 481.6M180 483.1L249 521.0L318 483.1M180 484.6L249 522.5L318 484.6M180 504.1L249 542.0L318 504.1M180 505.6L249 543.5L318 505.6M180 507.1L249 545.0L318 507.1M180 508.6L249 546.5L318 508.6M180 528.0L249 566.0L318 528.0M180 529.5L249 567.5L318 529.5M180 531.0L249 569.0L318 531.0M180 532.5L249 570.5L318 532.5M180 549.0L249 587.0L318 549.0M180 550.5L249 588.5L318 550.5M180 552.0L249 590.0L318 552.0M180 553.5L249 591.5L318 553.5M180 567.0L249 605.0L318 567.0M180 568.5L249 606.5L318 568.5M180 570.0L249 608.0L318 570.0M180 571.5L249 609.5L318 571.5M180 583.0L249 621.0L318 583.0M180 584.5L249 622.5L318 584.5M180 586.0L249 624.0L318 586.0M180 587.5L249 625.5L318 587.5" stroke="#b8854f" stroke-width="1.0" fill="none" clip-path="url(#shield)"/>
<path d="M196.0 486 C190.0 530 191.0 565 196.0 578 C208.0 598 228.0 612 249.0 619.0M197.6 486 C191.5 530 192.5 565 197.7 578 C209.0 598 228.0 612 249.0 617.6M199.2 486 C193.0 530 194.0 565 199.4 578 C210.0 598 228.0 612 249.0 616.2M200.8 486 C194.5 530 195.5 565 201.1 578 C211.0 598 228.0 612 249.0 614.8M202.4 486 C196.0 530 197.0 565 202.8 578 C212.0 598 228.0 612 249.0 613.4M204.0 486 C197.5 530 198.5 565 204.5 578 C213.0 598 228.0 612 249.0 612.0M205.6 486 C199.0 530 200.0 565 206.2 578 C214.0 598 228.0 612 249.0 610.6M207.2 486 C200.5 530 201.5 565 207.9 578 C215.0 598 228.0 612 249.0 609.2" stroke="#a87446" stroke-width="0.8" fill="none"/>
<path d="M302.0 486 C308.0 530 307.0 565 302.0 578 C290.0 598 270.0 612 249.0 619.0M300.4 486 C306.5 530 305.5 565 300.3 578 C289.0 598 270.0 612 249.0 617.6M298.8 486 C305.0 530 304.0 565 298.6 578 C288.0 598 270.0 612 249.0 616.2M297.2 486 C303.5 530 302.5 565 296.9 578 C287.0 598 270.0 612 249.0 614.8M295.6 486 C302.0 530 301.0 565 295.2 578 C286.0 598 270.0 612 249.0 613.4M294.0 486 C300.5 530 299.5 565 293.5 578 C285.0 598 270.0 612 249.0 612.0M292.4 486 C299.0 530 298.0 565 291.8 578 C284.0 598 270.0 612 249.0 610.6M290.8 486 C297.5 530 296.5 565 290.1 578 C283.0 598 270.0 612 249.0 609.2" stroke="#a87446" stroke-width="0.8" fill="none"/>
<path d="M198 470 C225 468 273 468 300 470 C297 486 270 508 249 519 C228 508 201 486 198 470Z" stroke="none" stroke-width="0" fill="#0e0905" />
<clipPath id="bibc"><path d="M198 470 C225 468 273 468 300 470 C297 486 270 508 249 519 C228 508 201 486 198 470Z"/></clipPath>
<path d="M249 490l45.0 0.0M249 490l44.4 5.6M249 490l42.8 11.1M249 490l40.1 16.3M249 490l36.4 21.2M249 490l31.8 25.5M249 490l26.5 29.1M249 490l20.4 32.1M249 490l13.9 34.2M249 490l7.0 35.6M249 490l0.0 36.0M249 490l-7.0 35.6M249 490l-13.9 34.2M249 490l-20.4 32.1M249 490l-26.5 29.1M249 490l-31.8 25.5M249 490l-36.4 21.2M249 490l-40.1 16.3M249 490l-42.8 11.1M249 490l-44.4 5.6M249 490l-45.0 0.0M249 490l-44.4 -5.6M249 490l-42.8 -11.1M249 490l-40.1 -16.3M249 490l-36.4 -21.2M249 490l-31.8 -25.5M249 490l-26.5 -29.1M249 490l-20.4 -32.1M249 490l-13.9 -34.2M249 490l-7.0 -35.6M249 490l-0.0 -36.0M249 490l7.0 -35.6M249 490l13.9 -34.2M249 490l20.4 -32.1M249 490l26.5 -29.1M249 490l31.8 -25.5M249 490l36.4 -21.2M249 490l40.1 -16.3M249 490l42.8 -11.1M249 490l44.4 -5.6" stroke="#a87446" stroke-width="0.7" fill="none" clip-path="url(#bibc)"/>
<path d="M249 490l4.9 0.5M249 490l7.7 3.4M249 490l3.8 3.4M249 490l4.1 7.0M249 490l1.8 8.5M249 490l-0.5 4.6M249 490l-3.4 7.8M249 490l-4.0 4.5M249 490l-4.4 2.6M249 490l-4.8 1.0M249 490l-4.2 -0.4M249 490l-5.9 -2.6M249 490l-4.4 -3.9M249 490l-4.2 -7.1M249 490l-1.7 -8.0M249 490l0.4 -4.3M249 490l2.4 -5.5M249 490l4.0 -4.4M249 490l4.2 -2.5M249 490l5.1 -1.1" stroke="#e0a050" stroke-width="0.7" fill="none"/>
<path d="M249 485 Q250.5 490 249 496" stroke="#1a1008" stroke-width="0.9" fill="none"/>
<path d="M184.5 325.5Q187.5 357.0 228.0 352.0Q238.0 350.5 249.0 355.0M180.8 326.2Q183.8 359.6 226.7 354.6Q238.0 353.1 249.0 357.6M177.2 327.0Q180.2 362.2 225.3 357.2Q238.0 355.7 249.0 360.2M175.2 330.0Q178.2 364.8 224.0 359.8Q238.0 358.2 249.0 362.8M173.3 333.3Q176.3 367.3 222.7 362.3Q238.0 360.8 249.0 365.3M171.3 336.4Q174.3 369.9 221.3 364.9Q238.0 363.4 249.0 367.9M169.3 339.6Q172.3 372.5 220.0 367.5Q238.0 366.0 249.0 370.5M167.3 342.7Q170.3 375.1 218.7 370.1Q238.0 368.6 249.0 373.1M165.3 345.9Q168.3 377.7 217.3 372.7Q238.0 371.2 249.0 375.7M163.2 349.0Q166.2 380.2 216.0 375.2Q238.0 373.8 249.0 378.2M161.2 352.2Q164.2 382.8 214.7 377.8Q238.0 376.3 249.0 380.8M159.3 355.3Q162.3 385.4 213.3 380.4Q238.0 378.9 249.0 383.4M157.3 358.5Q160.3 388.0 212.0 383.0Q238.0 381.5 249.0 386.0M184.0 328.0Q200.0 360.0 249.0 362.0M187.0 330.5Q203.0 361.5 249.0 365.0M190.0 333.0Q206.0 363.0 249.0 368.0M193.0 335.5Q209.0 364.5 249.0 371.0M196.0 338.0Q212.0 366.0 249.0 374.0M199.0 340.5Q215.0 367.5 249.0 377.0M202.0 343.0Q218.0 369.0 249.0 380.0" stroke="#a07044" stroke-width="0.7" fill="none"/>
<path d="M313.5 325.5Q310.5 357.0 270.0 352.0Q260.0 350.5 249.0 355.0M317.2 326.2Q314.2 359.6 271.3 354.6Q260.0 353.1 249.0 357.6M320.8 327.0Q317.8 362.2 272.7 357.2Q260.0 355.7 249.0 360.2M322.8 330.0Q319.8 364.8 274.0 359.8Q260.0 358.2 249.0 362.8M324.7 333.3Q321.7 367.3 275.3 362.3Q260.0 360.8 249.0 365.3M326.7 336.4Q323.7 369.9 276.7 364.9Q260.0 363.4 249.0 367.9M328.7 339.6Q325.7 372.5 278.0 367.5Q260.0 366.0 249.0 370.5M330.7 342.7Q327.7 375.1 279.3 370.1Q260.0 368.6 249.0 373.1M332.7 345.9Q329.7 377.7 280.7 372.7Q260.0 371.2 249.0 375.7M334.8 349.0Q331.8 380.2 282.0 375.2Q260.0 373.8 249.0 378.2M336.8 352.2Q333.8 382.8 283.3 377.8Q260.0 376.3 249.0 380.8M338.7 355.3Q335.7 385.4 284.7 380.4Q260.0 378.9 249.0 383.4M340.7 358.5Q337.7 388.0 286.0 383.0Q260.0 381.5 249.0 386.0M314.0 328.0Q298.0 360.0 249.0 362.0M311.0 330.5Q295.0 361.5 249.0 365.0M308.0 333.0Q292.0 363.0 249.0 368.0M305.0 335.5Q289.0 364.5 249.0 371.0M302.0 338.0Q286.0 366.0 249.0 374.0M299.0 340.5Q283.0 367.5 249.0 377.0M296.0 343.0Q280.0 369.0 249.0 380.0" stroke="#a07044" stroke-width="0.7" fill="none"/>
<clipPath id="fh"><path d="M218 352 L280 352 L278 400 L249 445 L220 400Z"/></clipPath>
<path d="M222.0 352Q226.0 392 249.0 430M276.0 352Q272.0 392 249.0 430M229.0 352Q233.0 392 249.0 430M269.0 352Q265.0 392 249.0 430M236.0 352Q240.0 392 249.0 430M262.0 352Q258.0 392 249.0 430M243.0 352Q247.0 392 249.0 430M255.0 352Q251.0 392 249.0 430M250.0 352Q254.0 392 249.0 430M248.0 352Q244.0 392 249.0 430M257.0 352Q261.0 392 249.0 430M241.0 352Q237.0 392 249.0 430M264.0 352Q268.0 392 249.0 430M234.0 352Q230.0 392 249.0 430M271.0 352Q275.0 392 249.0 430M227.0 352Q223.0 392 249.0 430M278.0 352Q282.0 392 249.0 430M220.0 352Q216.0 392 249.0 430M218 352.0Q249 366.0 280 352.0M218 358.0Q249 372.0 280 358.0M218 364.0Q249 378.0 280 364.0M218 370.0Q249 384.0 280 370.0M218 376.0Q249 390.0 280 376.0M218 382.0Q249 396.0 280 382.0" stroke="#a07044" stroke-width="0.7" fill="none" clip-path="url(#fh)"/>
<path d="M154.5 425.5a51.0 44.0 0 1 0 102.0 0a51.0 44.0 0 1 0 -102.0 0Z" stroke="none" stroke-width="0" fill="#0c0804" />
<path d="M160.0 424.9a45.8 41.8 0 1 0 91.6 0a45.8 41.8 0 1 0 -91.6 0Z" stroke="none" stroke-width="0" fill="#22160a" />
<path d="M160.0 424.9a45.8 41.8 0 1 0 91.6 0a45.8 41.8 0 1 0 -91.6 0ZM158.6 425.1a47.1 42.4 0 1 0 94.2 0a47.1 42.4 0 1 0 -94.2 0ZM157.2 425.2a48.4 42.9 0 1 0 96.8 0a48.4 42.9 0 1 0 -96.8 0ZM155.9 425.4a49.7 43.5 0 1 0 99.4 0a49.7 43.5 0 1 0 -99.4 0ZM154.5 425.5a51.0 44.0 0 1 0 102.0 0a51.0 44.0 0 1 0 -102.0 0Z" stroke="#a87446" stroke-width="0.8" fill="none"/>
<path d="M204.6 464.8l-3.4 -3.4M200.1 454.8l-6.4 2.4M216.7 459.3l-4.1 5.7M180.3 448.2l-5.4 -2.0M247.3 436.3l-5.1 3.7M203.9 467.2l-6.0 -4.1M240.6 418.4l-2.6 3.6M170.6 445.3l-3.9 -2.1M162.5 419.0l3.4 -3.1M232.8 404.5l6.4 3.6M218.1 456.8l-6.3 -2.2M200.7 461.3l-3.9 -5.8M202.0 457.2l-3.7 -4.0M221.4 453.6l-3.0 4.7M237.7 447.7l-5.9 0.7M170.3 415.9l4.2 -3.5M198.0 388.7l4.2 -5.2M234.4 446.2l-2.3 7.1M174.5 422.9l-3.3 -5.9M213.0 457.1l-5.1 3.1M181.2 439.2l-6.4 -3.2M240.6 408.8l4.8 5.3M199.5 385.2l3.9 -2.4M247.4 444.9l-5.1 1.3M206.5 386.6l5.0 3.3M176.9 457.0l-1.3 -6.6M168.5 444.5l0.3 -5.1M227.3 402.0l6.4 1.4M218.5 460.5l-5.3 4.5M188.7 449.3l-1.5 -4.4M247.3 417.1l-2.2 4.6M230.9 445.5l-0.2 4.3M239.9 440.8l1.3 4.1M211.7 385.2l4.4 5.0M182.0 436.8l-6.1 -2.9M183.9 442.4l0.4 -5.3M231.9 414.2l5.3 4.9M168.7 440.0l1.7 -5.5M211.1 454.1l-4.0 4.0M233.3 440.6l-0.1 6.4M202.6 454.6l-4.7 1.5M170.6 437.7l2.6 -6.5M170.6 420.1l3.6 -3.1M170.2 437.9l2.9 -5.6M181.4 400.7l0.6 -6.1M214.7 462.0l-5.7 -1.8M175.3 429.7l1.1 -3.9M185.0 399.4l4.2 -0.2M188.5 390.8l7.1 0.9M213.7 390.2l6.3 -2.0M235.6 446.2l0.4 7.0M166.7 418.7l-1.5 -4.1M188.5 392.7l2.6 -4.8M177.3 425.1l3.2 -4.5M171.7 434.1l-4.6 -3.7M176.7 395.0l4.3 -1.0M205.7 462.5l-3.8 -3.0M194.7 452.2l-4.2 -0.6M179.5 447.0l-0.8 -4.6M173.9 425.1l3.2 -4.3M181.9 440.4l0.8 -6.9M205.8 457.0l-6.7 2.1M239.0 428.1l2.0 5.2M169.4 431.5l2.9 -5.2M240.6 435.1l0.3 4.8M236.2 398.1l4.0 2.1M211.1 385.8l4.0 -2.7M236.0 403.6l4.7 3.3M228.5 450.8l-6.5 0.4M181.4 422.1l-2.5 -4.8M178.7 413.8l-1.5 -4.1M227.8 399.1l4.9 2.1M202.0 386.5l5.9 4.4M218.4 460.3l-3.4 4.0M228.3 387.7l1.2 4.1M208.6 456.8l-3.8 3.0M219.5 458.7l-3.0 4.0M171.0 417.7l4.9 -3.6M177.2 435.8l1.6 -4.1M234.0 398.1l-0.6 7.1M211.6 460.9l-4.8 5.7M192.2 455.1l-3.8 -6.0M183.3 402.0l3.9 -1.1M170.9 439.4l-3.7 -2.5M230.1 459.9l-7.4 -0.1M220.4 459.5l-5.3 -1.2M244.8 424.1l-3.9 4.7M236.5 421.6l-4.1 6.8M238.9 447.4l-1.7 7.7M197.2 456.8l-7.4 0.5M235.8 395.0l4.3 1.8M180.1 394.6l7.2 0.1M242.9 421.3l4.9 5.1M190.3 395.9l2.3 -6.2M238.2 426.9l-3.4 5.0M235.7 406.5l-1.9 6.2M207.0 386.4l6.4 -2.4M187.1 396.7l7.2 -1.5M171.9 440.0l0.8 -6.9M216.5 383.7l5.2 4.8M172.5 416.0l5.4 -5.4M172.7 417.5l5.7 -4.2M200.7 458.2l-3.5 -5.3M168.6 451.8l1.0 -7.6M186.3 399.2l4.1 -0.9M180.3 394.7l6.0 -0.2M172.4 422.1l-2.5 -7.6M242.5 443.7l-5.3 1.7M230.0 456.1l-4.4 6.2M204.7 465.1l-4.4 2.3M190.3 391.5l7.1 1.4M191.2 393.0l6.4 0.2M238.7 400.9l0.5 5.8M175.3 410.3l3.4 -2.5M175.8 413.5l-1.3 -3.8M233.9 428.8l2.6 4.8M219.4 391.3l5.8 -2.0M189.9 390.3l5.3 0.9M211.4 386.1l4.5 3.6M195.2 388.7l7.0 3.3M191.5 386.8l5.3 1.3M249.2 425.1l2.3 3.5M191.4 392.2l4.6 -5.8M239.4 429.8l-5.1 5.6M190.0 454.3l-6.7 -1.3M185.0 455.8l-1.9 -5.1M183.6 402.1l0.1 -4.6M206.7 460.2l-4.5 -5.4M162.9 418.5l3.8 -2.8M224.7 386.3l2.1 5.2M219.2 459.2l-5.0 4.4M180.6 458.4l-2.6 -7.2M186.3 392.5l5.4 -0.5M249.2 442.6l-6.6 2.4M203.0 459.4l-3.2 -3.6M197.5 385.3l4.3 2.7M208.9 464.5l-4.0 1.8M164.1 407.7l3.8 -1.5M214.4 384.9l3.8 3.9M203.0 389.8l5.1 -2.9M204.7 389.3l5.7 -4.8M207.5 386.4l4.4 -3.2M243.4 419.0l3.5 4.6M234.4 447.6l-5.4 0.6M231.3 400.6l4.6 1.5M191.1 391.8l1.8 -3.9M212.8 463.6l-6.0 -4.2M170.7 406.2l4.0 -1.3M238.8 438.9l1.2 4.8M212.7 389.9l4.1 -1.4M181.3 448.5l-6.5 -3.3M219.0 463.7l-4.0 -1.9M233.8 439.5l-7.0 2.5M221.9 455.0l-5.9 -0.0M190.0 396.0l2.3 -4.6M224.2 399.5l6.9 2.2M193.3 449.6l-6.5 0.5M169.9 439.6l-5.2 -5.3M224.5 388.5l2.1 5.9M185.7 439.3l-5.3 -2.8M212.0 457.5l-5.3 5.4M234.1 411.5l5.7 4.8M238.9 398.3l4.2 1.5M212.3 457.4l-5.0 5.9M248.3 429.6l3.0 5.7M233.6 399.9l0.5 7.3M239.1 447.6l0.6 5.4M234.3 428.6l2.8 4.3M191.9 387.0l5.5 -4.8M195.6 386.6l7.0 2.3M186.3 455.0l-6.3 0.2M170.4 415.0l-1.5 -4.1M176.2 408.6l-0.9 -7.8M170.2 398.1l4.7 -0.9M166.7 421.7l5.1 -4.1M199.2 460.5l-6.0 3.1M185.7 395.3l2.2 -7.6M178.9 455.4l-0.6 -6.0M197.0 460.7l-2.6 -4.5M195.4 385.6l3.8 2.1M244.5 413.8l-2.4 4.6M242.3 421.3l-2.0 4.0M181.3 452.9l-1.6 -6.8M176.6 407.0l5.2 -3.7M219.9 454.6l-5.5 -1.0M219.0 384.3l2.3 4.0M251.8 423.9l-2.9 4.1M224.5 388.0l3.5 5.2M242.7 399.8l-0.4 5.2M178.2 394.5l7.0 -0.6M220.3 459.3l-5.8 5.2M239.0 423.3l-2.7 3.3M188.3 402.0l1.0 -7.6M229.5 399.3l0.8 5.7M180.6 424.3l-2.6 -3.1M192.8 393.0l4.2 -6.6M191.0 454.9l-7.3 0.6M219.3 389.9l2.7 4.6M243.7 446.9l-6.4 3.5M192.8 450.5l-5.2 -0.1M177.4 432.9l-3.6 -3.1M220.9 388.8l7.4 -1.9M218.1 453.6l-5.1 5.5M222.1 461.8l-6.5 -2.6M246.0 442.0l-4.6 2.0M203.0 461.3l-5.4 -5.3M192.3 458.0l-3.1 -6.9M233.4 442.0l-0.5 5.0M235.0 406.7l-0.5 4.8M232.8 403.4l4.1 1.8M178.5 425.1l-3.0 -3.0M186.6 404.9l0.1 -7.6M223.2 455.1l-3.5 4.0M241.6 417.6l4.3 6.2M170.7 446.1l0.2 -7.9M233.6 447.8l-1.9 5.8M174.4 428.3l2.2 -4.7M212.5 391.4l5.1 -2.5M213.7 385.4l5.7 -1.3M202.5 461.2l-3.6 1.9M223.4 388.4l1.9 4.6M231.7 401.9l4.2 2.1M212.6 387.8l5.3 -2.2M249.7 411.8l-1.3 5.2M174.1 424.9l2.7 -5.7M164.5 411.3l5.6 -3.4M177.1 394.4l5.3 -0.6M246.5 411.9l-2.3 4.5M176.7 418.6l-3.4 -5.2M234.2 453.4l-1.6 7.1M179.9 436.6l1.0 -5.3M203.5 459.4l-4.0 -2.9M217.6 455.8l-2.8 5.3M170.9 444.3l1.2 -5.4M182.0 453.9l-5.5 -1.6M237.0 443.6l-0.8 5.3M221.7 457.3l-7.7 -1.1M198.0 392.1l2.9 -3.3M177.3 404.4l4.4 -1.0M194.6 391.1l2.2 -4.0M175.5 401.6l0.9 -6.6M179.1 391.6l4.8 -0.4M167.4 415.2l5.8 -4.2M186.4 454.2l-5.4 -0.0M197.7 466.7l-3.4 -4.5M180.0 459.2l-3.2 -6.8M174.8 443.4l0.7 -7.7M182.6 455.4l-4.4 -1.0M245.0 444.0l-5.3 2.5M239.4 403.7l3.4 2.1M223.6 390.7l3.0 6.3M180.0 453.5l-1.2 -5.3M219.0 385.7l2.0 4.5M223.5 459.7l-3.1 6.4M235.2 404.5l-0.6 7.1M172.7 424.0l-3.0 -4.6M175.9 432.8l1.2 -4.9M245.4 421.5l2.3 3.9M175.6 453.1l-6.4 -2.6M206.9 382.1l5.2 3.7M236.1 449.7l-4.8 1.5M233.9 440.7l0.1 6.2M180.8 454.0l-0.8 -7.2M251.2 423.4l-3.6 3.8M180.9 404.1l4.5 -2.2M198.3 389.4l5.3 -5.0M209.7 463.1l-5.8 3.0M214.8 389.7l3.9 -1.1M243.0 443.8l-4.1 1.8M168.8 403.7l0.2 -6.0M173.8 446.7l-0.2 -6.9M244.4 402.8l0.2 7.8M183.8 443.2l-4.5 -1.6M244.9 422.0l2.5 4.7M237.4 446.3l-5.8 2.5M172.1 414.1l6.4 -4.2M165.8 401.8l6.9 -1.3M170.3 415.4l3.7 -4.4M180.1 415.7l-0.6 -5.5M249.0 421.6l-4.1 4.7M238.7 443.9l-6.7 2.4M223.3 385.6l2.5 5.4M220.9 397.5l7.8 0.2M181.2 455.1l-0.8 -4.5M167.6 420.5l-1.4 -4.9M162.4 427.2l-2.8 -5.8M177.7 451.4l-6.9 -2.5M212.9 391.7l7.4 -1.1M218.9 390.0l6.0 -2.2M203.0 389.4l5.1 -2.9M180.7 422.9l-3.3 -3.6M179.7 404.5l-0.9 -5.7M204.7 460.8l-5.0 -5.4M186.5 389.8l7.2 1.8M184.8 453.5l-2.3 -5.3M247.6 410.8l-1.9 3.6M216.0 390.8l5.1 -0.2M189.3 390.1l4.5 -4.5M184.6 402.4l1.6 -4.9M226.7 457.6l-7.6 -0.9M219.4 460.7l-4.6 -1.9M249.4 443.0l-7.4 2.9M237.2 414.0l-1.2 4.8M199.0 388.0l5.1 -3.1M183.6 439.2l-5.0 -4.6M237.6 401.4l0.6 5.1M238.8 412.8l2.9 3.8M195.7 383.1l4.8 2.3M228.0 390.2l2.0 5.9M220.8 393.1l7.2 -0.5M231.8 437.7l1.2 4.9M183.0 399.8l7.6 -2.3M239.8 445.1l0.3 7.0M204.9 383.5l5.5 4.3M191.5 389.2l7.4 1.6M194.2 458.4l-4.7 0.7M190.5 392.9l4.6 0.0M205.4 386.1l3.4 3.4M178.8 406.5l4.5 -2.6M212.8 461.0l-6.1 -4.0M168.1 423.1l4.0 -5.4M199.4 383.7l4.6 2.8M196.6 391.3l2.9 -3.2M211.6 386.8l6.8 -4.1M216.5 462.4l-4.7 -1.3M236.6 425.8l2.4 7.5M232.9 457.2l-4.7 0.4M174.9 439.4l1.4 -4.7M220.9 455.3l-6.2 -0.9M185.7 392.1l7.0 0.2M189.1 395.0l1.5 -5.7M233.2 391.4l1.1 4.2M177.5 404.3l0.9 -4.2M207.7 382.1l4.3 2.8M235.3 457.1l-5.4 -0.4M208.6 385.3l5.9 4.2M229.4 389.9l1.2 5.7M173.9 445.8l0.1 -7.5M237.2 393.2l0.0 4.7M161.9 429.9l3.1 -4.1M214.9 459.6l-4.4 3.0M181.9 394.2l7.0 0.6M177.7 418.7l4.9 -3.7M177.1 428.3l-3.1 -5.3M236.8 456.3l-6.3 0.4M241.6 402.8l-0.7 4.5M198.9 452.7l-5.8 1.7M243.8 435.8l1.9 6.5M169.5 436.2l-5.3 -4.5M212.1 464.9l-3.1 2.5M191.7 451.1l-2.1 -4.1M245.2 404.7l-0.5 6.0M231.8 450.3l-1.8 4.0M188.9 396.3l2.7 -6.3M207.8 390.4l7.3 -3.3M200.9 453.3l-6.0 2.9M209.6 457.7l-3.1 -2.5M202.4 381.5l4.3 3.8M184.1 404.3l0.7 -5.6M236.8 432.5l-3.6 2.5M177.9 425.1l3.3 -5.8M243.6 418.5l-4.1 5.4M169.6 411.1l-1.2 -5.5M162.1 440.4l1.5 -6.5M190.2 448.4l-5.9 -0.1M196.0 387.9l5.2 1.7M185.8 438.9l-6.1 -3.1M190.6 445.8l-6.5 -0.6M239.9 450.9l-7.3 1.4M226.8 392.7l6.1 0.7M246.9 435.8l1.1 4.5M176.1 393.1l7.2 -0.5M241.4 409.6l4.4 2.2M204.2 386.9l4.7 -3.8M161.6 435.6l3.1 -4.8M176.2 395.6l0.6 -4.5M216.0 454.1l-3.9 4.4M183.0 453.5l-1.8 -4.3M238.7 427.9l-5.7 4.1M223.8 453.3l-2.6 5.7M218.8 464.4l-5.4 -2.0M221.1 389.5l5.7 -1.0M235.9 447.0l-7.6 0.8M213.3 387.8l2.6 4.5M196.9 461.8l-3.7 -3.9M180.6 435.2l-4.7 -2.6M178.7 424.8l3.6 -4.3M248.9 428.4l-5.0 4.2M176.1 409.7l5.6 -2.3M193.1 451.1l-6.7 0.4M224.4 460.1l-2.4 5.9M195.2 394.1l3.3 -5.7M241.9 448.9l-6.4 2.5M239.3 416.3l3.1 4.0M164.8 441.6l2.5 -7.3M218.3 456.2l-4.4 5.1M203.5 462.2l-3.4 -3.0M234.6 393.0l1.4 7.6M179.4 405.1l-0.2 -4.8M189.7 393.8l5.9 1.3M225.2 461.3l-2.7 3.0M174.7 444.8l0.7 -5.2M172.0 442.0l-5.9 -3.7M202.6 461.0l-5.8 2.9M247.3 428.7l-5.4 5.5M181.3 446.5l-4.6 -0.6M176.1 418.2l-3.0 -5.4M237.0 447.7l-1.9 7.4M209.1 457.6l-4.4 -2.3M186.6 442.4l-7.6 -1.6M207.9 389.0l4.3 -2.3M231.1 408.5l6.1 4.0M198.6 453.0l-6.6 1.9M209.3 462.2l-4.2 4.4M220.0 455.3l-5.4 5.1M224.7 395.6l0.9 4.5M236.0 417.8l-1.4 4.1M170.5 431.8l-3.0 -2.7M222.8 390.1l4.5 -0.1M231.6 403.6l4.6 2.6M190.2 456.3l-4.6 -0.6M195.8 393.3l3.6 -5.5M244.1 428.8l4.4 6.6M196.5 391.0l4.4 -4.8M182.7 457.9l-2.3 -7.3M176.7 390.8l5.8 1.0M238.7 404.9l3.8 2.6M211.2 385.3l7.1 -1.9M223.1 385.0l4.1 6.4M247.5 422.8l2.9 2.9M247.4 429.3l-5.9 4.5M181.7 441.6l0.9 -6.8M170.8 409.9l6.2 -3.6M182.4 408.4l-1.6 -7.2M224.9 456.2l-7.0 -0.4M229.6 455.8l-6.0 -0.7M184.4 399.5l1.4 -7.1M215.3 456.5l-3.1 3.5M223.8 392.7l6.6 0.7M230.9 446.6l-0.1 4.5M216.6 393.1l4.1 -0.9M199.0 461.4l-4.6 -6.0M237.8 430.4l-4.2 3.0M190.9 394.1l1.6 -5.1M246.2 437.4l0.4 5.0M180.8 449.5l0.5 -7.7M229.9 444.6l-1.1 7.0M195.5 387.5l4.5 -3.3M164.5 416.2l-2.2 -6.8M209.2 385.7l3.3 4.1M175.2 412.9l3.5 -3.6M235.6 417.2l3.9 6.0M170.9 410.7l-1.2 -4.4M238.9 403.9l7.0 2.7M196.6 382.8l6.2 2.7M174.8 448.2l-0.0 -5.6M243.8 447.0l-6.3 3.2M187.3 397.3l1.6 -4.6M162.2 427.9l3.5 -4.2M236.9 421.6l2.6 3.8M228.6 390.0l0.9 4.5M234.1 454.6l-4.4 0.8M213.2 466.0l-4.1 -2.7M219.9 453.5l-2.7 5.7M163.1 432.5l2.4 -5.4M185.2 401.6l1.1 -5.3M213.2 389.3l5.1 -1.3M204.1 390.6l5.0 -5.2M227.2 393.4l0.7 4.8M242.4 407.7l-1.0 5.6M225.1 394.7l2.5 5.7M192.9 462.6l-5.0 1.4M185.5 452.8l-7.4 -1.4M248.7 413.3l-1.9 6.2M167.5 408.9l5.8 -3.9M216.0 459.3l-3.7 3.9M168.2 414.5l-1.6 -7.6M183.8 454.0l-1.9 -5.1M238.3 445.3l-3.8 1.9M183.1 454.1l-0.9 -6.1M241.7 427.3l2.6 4.0M245.0 403.6l-0.3 7.1M218.2 386.0l1.9 3.9M169.4 437.4l-6.1 -3.6M196.7 457.2l-2.0 -3.9M183.6 392.4l4.7 -0.5M163.8 414.5l5.4 -5.1M232.5 454.5l-4.5 1.1M190.7 452.3l-2.4 -4.7M244.6 433.5l-3.8 2.7M237.2 422.5l-5.2 5.1M233.8 394.7l0.1 5.7M176.4 429.8l-5.5 -5.0M240.2 444.1l-6.5 2.6M183.0 443.7l-0.6 -7.7M224.0 452.2l-3.1 5.9M226.1 451.6l-0.8 4.0M177.1 422.3l-1.6 -5.0M209.9 387.0l4.8 -3.0M166.5 430.8l3.6 -5.6M183.1 443.7l-0.7 -5.0M216.4 465.0l-6.8 -3.5M194.7 452.4l-5.8 0.7M226.5 388.9l1.1 5.1M235.8 453.3l-0.5 5.3M227.3 392.6l1.4 7.3M213.8 387.8l4.2 5.6M230.3 455.3l-4.0 0.6M177.4 439.2l-5.4 -5.4M171.7 413.7l-0.9 -5.7M211.1 461.1l-6.3 3.4M225.8 454.7l-5.4 -0.7M239.5 409.2l-2.6 5.7M192.0 387.1l4.0 -4.0M244.4 440.3l-6.0 2.0M213.5 454.4l-3.0 4.3M200.6 385.7l4.3 -3.3M232.2 455.4l-6.1 0.8M198.3 388.0l5.1 -5.5M198.3 460.8l-4.4 1.0" stroke="#b8854f" stroke-width="0.8" fill="none" opacity="0.95"/>
<path d="M180.6 422.6a26.3 33.5 0 1 0 52.6 0a26.3 33.5 0 1 0 -52.6 0ZM173.8 423.4a32.8 36.3 0 1 0 65.6 0a32.8 36.3 0 1 0 -65.6 0ZM166.9 424.1a39.3 39.0 0 1 0 78.6 0a39.3 39.0 0 1 0 -78.6 0ZM162.2 424.7a43.7 40.9 0 1 0 87.4 0a43.7 40.9 0 1 0 -87.4 0Z" stroke="#a87446" stroke-width="0.6" fill="none" opacity="0.8"/>
<path d="M241.5 425.5a51.0 44.0 0 1 0 102.0 0a51.0 44.0 0 1 0 -102.0 0Z" stroke="none" stroke-width="0" fill="#0c0804" />
<path d="M246.4 424.9a45.8 41.8 0 1 0 91.6 0a45.8 41.8 0 1 0 -91.6 0Z" stroke="none" stroke-width="0" fill="#22160a" />
<path d="M246.4 424.9a45.8 41.8 0 1 0 91.6 0a45.8 41.8 0 1 0 -91.6 0ZM245.2 425.1a47.1 42.4 0 1 0 94.2 0a47.1 42.4 0 1 0 -94.2 0ZM244.0 425.2a48.4 42.9 0 1 0 96.8 0a48.4 42.9 0 1 0 -96.8 0ZM242.7 425.4a49.7 43.5 0 1 0 99.4 0a49.7 43.5 0 1 0 -99.4 0ZM241.5 425.5a51.0 44.0 0 1 0 102.0 0a51.0 44.0 0 1 0 -102.0 0Z" stroke="#a87446" stroke-width="0.8" fill="none"/>
<path d="M279.6 387.7l4.0 0.8M314.1 452.0l-7.8 0.8M313.9 396.0l0.9 6.4M254.5 427.0l-5.2 -5.3M256.8 407.6l-0.9 -7.4M266.3 401.4l-0.0 -5.2M283.0 390.5l5.9 -5.2M256.3 411.0l-0.7 -4.0M256.0 397.9l5.7 -0.8M308.1 388.9l6.8 -0.9M249.3 422.8l-3.1 -6.0M326.0 446.1l0.6 7.5M264.4 449.6l-4.8 -1.2M248.0 431.1l1.5 -4.6M329.1 442.3l-0.6 5.7M281.0 456.2l-1.8 -4.5M316.6 426.9l1.4 5.3M302.6 387.9l3.8 5.3M322.8 394.0l0.9 5.6M295.1 381.9l5.7 4.7M307.6 385.8l2.3 3.3M321.5 435.3l1.3 7.0M281.3 454.2l-6.4 0.7M294.8 388.6l5.7 -3.6M262.3 419.0l-1.2 -4.5M304.8 392.3l6.5 -1.1M271.0 449.3l-7.8 -1.1M282.4 388.4l4.0 1.4M314.0 395.9l-0.1 6.9M324.6 445.5l-6.6 1.2M260.0 449.4l-7.5 -1.6M321.2 433.6l2.0 6.8M329.2 417.6l3.5 3.2M283.5 390.4l3.2 -3.3M276.1 384.3l4.7 1.8M311.8 455.3l-5.5 0.6M302.1 387.6l3.0 2.9M318.1 398.9l0.8 5.0M251.2 416.6l-3.1 -5.3M304.6 387.4l2.5 4.2M275.8 391.2l5.1 0.9M318.9 458.8l-4.1 -0.3M290.9 386.0l3.1 -2.6M313.7 390.3l1.5 5.3M332.0 410.4l5.3 5.9M301.9 386.4l3.3 4.3M266.1 441.2l0.4 -4.2M265.9 446.8l0.9 -7.1M282.2 462.4l-6.2 2.4M314.8 391.3l6.1 1.5M260.1 421.3l3.9 -5.4M305.7 394.2l5.3 0.7M289.7 461.2l-5.2 2.2M281.8 387.6l5.5 2.4M335.7 434.9l-5.1 3.9M273.9 459.2l-2.8 -4.1M309.4 463.7l-6.3 -1.9M318.0 417.3l4.2 3.6M334.8 410.2l-1.3 7.3M297.0 387.6l6.3 -3.9M290.7 465.4l-3.9 -2.3M255.2 403.8l5.6 -2.3M295.1 468.2l-6.1 -4.7M259.1 410.6l6.8 -3.8M301.6 462.0l-5.1 5.4M315.2 395.3l6.2 1.0M300.6 462.8l-6.2 -3.5M293.9 388.7l4.5 -1.9M331.7 423.9l5.0 5.8M315.0 389.2l2.7 5.8M326.2 412.6l4.4 5.9M283.4 382.3l5.4 3.9M272.0 391.8l4.7 0.8M300.0 392.5l7.2 -1.2M270.5 452.1l-0.8 -4.6M254.4 409.0l4.0 -3.4M302.5 389.0l3.8 4.6M260.0 444.1l-4.8 -3.7M271.8 401.1l0.2 -4.3M281.4 466.2l-5.3 -5.3M266.1 425.5l-3.1 -6.4M333.4 408.6l-0.9 5.1M316.7 442.5l-1.1 7.8M315.1 407.9l4.2 4.1M254.9 431.1l2.8 -4.2M294.8 385.5l3.7 -2.5M303.7 391.2l1.6 3.7M328.1 429.0l-5.5 4.5M282.1 462.2l-4.4 -5.2M259.1 437.2l-6.4 -3.9M260.0 442.6l-4.1 -3.4M272.0 393.4l4.8 -6.4M298.8 390.5l3.8 -1.2M249.1 435.9l3.3 -6.9M313.0 440.3l-1.6 7.5M293.3 385.6l5.1 3.4M269.4 453.7l-4.4 -0.9M317.1 412.7l4.1 4.5M312.2 448.6l-1.6 6.2M276.4 457.5l-4.3 1.1M280.8 390.6l3.2 -5.1M258.1 420.7l4.5 -5.9M319.5 426.1l2.9 5.5M255.1 414.5l3.7 -2.5M263.8 434.6l2.6 -6.1M293.7 386.5l5.5 5.1M307.0 391.5l2.5 4.8M287.3 385.5l6.8 3.2M305.9 461.4l-7.5 -1.0M250.8 416.0l-0.6 -4.4M321.9 452.9l-7.0 -0.3M314.0 395.7l1.7 7.0M305.4 387.5l4.0 -1.4M283.0 386.6l4.2 2.3M266.2 408.2l0.4 -5.1M300.5 388.5l2.1 4.6M251.3 433.5l3.2 -7.0M264.3 440.4l-6.7 -3.9M326.3 413.0l5.5 4.7M265.8 389.8l4.3 0.0M313.2 444.6l-1.6 5.5M328.0 432.1l-3.4 2.9M281.5 458.4l-2.7 -4.3M321.9 428.3l2.6 4.7M278.7 456.0l-7.8 -0.7M282.6 382.7l5.0 2.9M268.2 392.8l3.3 -5.5M269.7 459.6l-2.2 -4.1M320.9 421.5l2.8 6.7M315.5 412.9l4.4 6.1M305.8 456.0l-5.9 -1.1M315.9 391.9l1.5 4.8M270.3 397.7l1.2 -6.0M324.9 416.6l5.8 5.0M287.5 390.5l5.2 -4.8M311.1 453.0l-2.8 7.2M261.6 426.2l-2.9 -3.8M311.9 392.5l1.7 5.6M312.6 403.5l5.6 3.6M281.7 460.1l-3.4 -3.2M267.5 406.7l-0.4 -4.3M250.7 428.8l-2.7 -5.0M324.1 428.2l-5.6 4.3M286.3 386.5l5.4 3.9M307.9 386.5l3.3 4.9M293.9 383.3l3.2 3.8M330.0 415.3l-1.1 4.4M320.5 425.1l2.9 6.6M310.6 395.6l6.7 1.0M269.2 395.9l0.9 -5.9M262.5 446.9l-5.3 -1.0M261.7 433.3l1.7 -5.2M302.9 461.3l-5.9 -1.3M284.5 457.8l-2.7 -4.9M304.2 458.1l-6.2 -3.0M272.2 386.5l5.2 1.5M267.3 441.6l-4.3 -2.9M259.5 425.8l-2.0 -3.8M256.4 448.4l-0.5 -4.3M256.3 423.9l4.5 -5.8M278.0 393.7l3.1 -7.1M295.8 386.5l4.3 4.0M322.0 409.8l5.3 3.8M290.8 454.8l-6.9 3.2M249.6 407.3l6.4 -2.2M315.5 443.1l0.1 4.5M313.1 439.1l-0.2 5.4M269.9 445.5l-4.2 -1.7M311.3 390.9l6.0 0.8M331.3 413.2l-1.6 3.7M327.8 445.9l-5.3 2.1M275.4 464.4l-2.3 -5.8M293.4 458.4l-6.7 -3.2M317.3 458.1l-6.5 -1.1M318.7 407.7l-1.8 4.7M266.9 411.9l0.0 -5.6M286.1 386.1l4.6 2.6M312.5 447.4l-5.8 0.6M283.5 461.2l-6.4 1.3M267.9 405.6l0.5 -5.6M261.2 436.1l1.1 -7.2M281.3 460.7l-2.2 -4.2M295.1 390.5l4.5 -2.5M338.2 420.5l-2.9 6.1M315.7 415.9l4.2 6.6M283.9 461.7l-4.0 -5.5M303.7 387.6l2.6 4.4M268.0 436.2l-5.0 -4.0M316.1 392.7l0.2 6.7M286.2 454.7l-4.9 1.2M297.4 458.4l-6.5 -3.1M313.5 453.1l-2.9 6.7M266.8 413.1l-1.6 -7.1M304.3 383.7l2.7 5.0M323.7 411.6l4.7 6.2M266.4 394.9l3.4 -7.1M273.0 387.6l7.4 2.0M286.8 387.2l7.2 3.2M326.8 406.4l-0.7 5.9M276.0 450.4l-6.9 -1.0M306.1 394.7l5.8 -0.9M286.2 383.3l3.8 1.5M319.7 415.9l2.6 3.7M280.5 456.9l-7.4 0.3M258.9 438.3l-5.1 -5.7M305.8 457.7l-4.4 6.0M318.3 438.6l-0.6 7.6M283.4 461.0l-3.6 -6.2M321.3 391.1l1.6 7.0M321.3 455.1l-4.0 0.1M300.7 461.3l-4.5 3.4M322.5 401.0l4.3 1.6M313.2 438.7l0.1 4.2M281.7 383.5l3.8 1.6M283.7 459.8l-4.2 2.0M252.4 407.0l7.2 -2.4M262.1 450.9l-0.3 -6.7M288.4 462.1l-4.9 -4.1M326.8 416.0l-2.7 5.7M246.8 414.5l4.1 -3.0M321.9 422.9l-3.2 4.5M275.6 453.1l-7.8 -1.7M291.2 383.7l3.7 1.9M253.0 434.9l1.9 -6.4M307.8 457.9l-3.0 6.0M285.1 389.4l3.3 -3.4M328.0 438.6l-6.4 4.5M279.5 391.4l4.1 -4.4M265.6 441.1l-3.8 -2.4M261.3 432.1l-6.1 -4.1M251.3 414.9l5.0 -4.5M247.5 434.9l2.0 -3.8M305.2 457.0l-5.7 -1.9M273.3 456.6l-2.0 -5.3M254.3 434.0l1.6 -6.4M320.0 423.3l-3.3 3.2M318.5 397.8l-0.6 6.0M287.6 462.9l-4.0 -4.7M267.5 395.9l1.8 -4.6M317.3 417.1l4.3 4.2M277.2 451.0l-7.6 -1.1M285.0 391.1l3.5 -3.7M283.6 386.3l3.6 -5.0M274.4 461.2l-5.6 0.3M250.7 427.1l3.2 -6.8M328.0 426.1l4.0 6.0M307.1 396.0l6.6 1.1M307.4 388.8l5.7 -1.0M269.8 451.3l-2.1 -6.0M307.4 454.2l-2.5 3.8M249.6 415.9l-0.7 -5.3M271.7 398.1l2.6 -6.7M256.9 447.1l-6.5 -2.0M270.4 390.0l4.5 -0.1M260.3 411.2l5.4 -2.4M302.8 389.0l4.7 -2.1M280.0 452.2l-4.9 -0.4M325.9 404.8l6.8 2.1M271.6 451.2l-0.9 -6.7M326.9 418.3l-3.1 4.5M276.6 456.8l-6.6 -0.1M311.8 458.9l-4.2 5.2M319.8 418.3l-4.1 5.6M306.0 391.9l4.1 -0.8M278.6 392.6l2.7 -4.6M305.6 391.8l1.3 6.1M315.0 453.3l-2.3 5.8M309.9 461.5l-1.8 3.8M333.2 435.2l1.7 3.7M267.2 402.2l0.9 -7.4M307.3 458.7l-2.6 4.7M248.5 428.6l-3.0 -4.3M259.1 435.1l3.7 -6.4M257.6 448.0l0.8 -5.8M256.7 445.8l-6.2 -3.5M312.3 391.6l7.1 0.2M255.2 440.2l0.6 -4.5M302.0 386.0l4.8 -0.6M326.0 454.1l-7.1 1.1M252.8 427.9l4.6 -5.1M273.1 455.7l-1.4 -4.5M253.9 425.8l2.9 -5.1M271.8 446.5l-5.9 -2.3M257.8 436.0l1.1 -6.2M309.0 390.1l2.1 4.0M280.7 387.8l5.0 -4.1M306.4 466.3l-5.8 -2.5M307.1 460.2l-3.5 3.4M326.0 425.6l-4.5 5.4M271.5 387.7l7.9 0.0M320.0 433.8l0.1 7.2M274.3 387.9l4.8 1.5M248.4 437.0l2.5 -5.0M269.5 459.2l-6.6 -0.8M260.6 400.0l4.7 -0.8M249.6 427.6l-3.2 -3.7M273.7 450.1l-4.5 -0.3M301.6 388.2l2.3 5.4M308.7 387.6l1.8 6.9M272.7 456.3l-8.0 0.7M328.2 413.9l-2.5 5.1M252.6 426.1l-4.4 -5.1M310.8 392.4l2.2 5.7M251.8 417.6l-2.8 -6.7M302.3 457.6l-5.4 -0.7M305.1 459.8l-5.5 -1.1M264.6 405.9l0.5 -5.1M281.7 387.3l4.1 -3.7M314.9 399.4l-0.1 4.1M253.2 421.3l-1.7 -3.8M310.9 456.6l-7.2 0.4M272.3 386.3l4.9 0.8M278.9 458.5l-5.7 1.3M258.2 444.1l-5.0 -2.1M306.0 462.7l-3.4 3.3M265.4 425.8l-3.4 -4.8M259.0 416.4l-1.4 -6.8M266.4 439.0l-3.8 -1.4M332.7 441.1l-4.9 4.1M271.9 450.6l-0.8 -7.7M317.8 450.5l-7.8 -0.3M319.7 441.5l-5.0 2.4M282.1 382.5l6.7 3.1M296.4 382.6l6.0 5.2M260.4 404.1l7.1 -1.9M281.1 390.1l3.9 -4.7M292.7 385.3l5.0 -3.6M265.1 398.5l5.9 -1.6M322.3 414.4l-2.2 5.8M324.5 430.4l1.4 4.1M326.0 402.9l5.9 1.9M306.2 388.6l7.7 -1.4M318.1 412.8l5.1 4.9M322.7 401.2l0.2 4.7M266.0 425.1l-2.7 -5.1M307.5 464.1l-5.6 -1.4M295.5 384.8l5.6 4.8M253.5 412.7l5.0 -3.6M276.1 389.0l6.9 1.9M331.1 435.1l-6.9 3.6M260.6 449.3l-0.9 -5.0M264.8 430.9l-4.3 -4.2M333.1 404.8l-1.1 5.0M326.6 400.2l0.4 5.9M265.9 450.3l-5.4 -1.6M301.2 387.6l3.0 3.8M275.6 390.6l3.4 -5.4M262.4 455.8l-1.6 -5.4M303.6 394.7l5.1 -0.0M293.7 461.6l-4.7 -3.7M268.5 448.9l-4.0 -0.2M289.9 387.2l4.1 -4.1M284.0 463.5l-4.3 -6.3M264.4 438.6l1.2 -4.4M264.8 400.4l1.2 -7.0M285.2 453.8l-7.4 1.0M297.5 466.0l-6.2 -2.3M328.1 432.3l-4.1 3.6M332.8 425.1l-4.7 5.8M307.3 456.8l-6.0 -0.5M283.9 453.7l-4.5 0.8M267.1 458.6l-0.8 -4.4M318.5 421.5l-1.8 3.9M328.4 420.3l2.6 4.5M312.1 394.2l1.5 5.8M326.9 420.1l4.5 6.2M262.0 438.0l1.9 -5.1M259.3 412.5l5.6 -4.4M258.7 412.2l-2.0 -5.6M306.6 459.7l-7.1 -3.2M296.8 387.4l5.0 6.2M286.0 386.3l3.5 -3.2M320.7 408.7l-1.2 6.3M253.7 431.2l4.1 -6.0M260.2 395.2l4.2 -0.2M264.1 395.8l1.5 -5.3M279.0 455.3l-3.9 -5.8M333.4 435.8l0.3 4.9M259.7 452.9l0.3 -5.3M309.2 445.2l-0.9 5.2M255.7 423.7l-4.1 -5.0M276.9 386.3l5.6 2.4M318.4 437.8l0.9 4.7M319.9 448.3l-6.7 0.5M250.8 426.3l-5.3 -5.4M321.3 441.7l-3.4 2.3M289.3 459.5l-5.3 2.2M300.1 463.3l-4.7 3.0M318.6 410.9l-1.5 4.8M328.3 430.4l2.3 5.4M310.1 396.6l1.8 5.0M326.2 405.8l3.6 1.8M302.0 456.1l-3.3 3.7M332.7 407.5l-2.1 5.7M321.1 398.9l0.3 4.1M329.2 405.7l6.0 4.3M330.7 424.5l-4.3 4.5M311.2 453.5l-1.8 4.5M328.9 410.0l6.1 3.4M308.7 397.2l5.0 1.7M327.9 413.3l4.4 4.3M282.0 452.0l-6.7 1.7M320.5 404.2l4.1 1.3M261.6 399.6l0.0 -6.5M257.3 443.7l-5.7 -2.5M321.4 418.9l4.5 4.1M278.8 456.8l-2.1 -3.4M315.7 388.2l0.9 4.2M304.6 387.8l2.9 4.6M252.9 424.4l2.9 -3.5M252.7 419.3l-2.5 -6.5M267.2 397.5l0.6 -6.5M253.3 441.5l1.7 -5.8M280.1 458.0l-6.2 1.2M320.6 439.1l-4.9 1.6M260.9 424.8l-3.9 -5.7M311.4 450.0l-2.7 6.2M321.0 396.3l0.7 6.1M324.8 440.2l0.8 5.5M286.0 386.3l2.8 -3.0M324.7 450.3l-5.9 1.0M272.6 393.2l6.3 1.3M266.7 396.5l1.3 -7.2M295.5 390.2l7.5 -2.5M298.9 382.6l3.3 4.1M280.2 457.2l-3.2 -7.3M270.9 397.8l4.6 -0.4M324.2 410.3l-0.8 5.2M257.0 439.7l2.4 -5.5M282.1 461.2l-6.0 1.1M269.8 446.9l0.2 -4.6M314.0 462.4l-5.7 0.2M305.9 454.7l-5.0 -1.3M327.7 445.4l-3.7 2.0M301.3 390.4l4.7 -1.4M262.2 398.5l0.8 -4.3M292.9 465.4l-6.4 -4.1M299.8 389.3l5.9 -2.1M253.9 413.0l5.1 -3.3M286.5 460.9l-5.5 1.2M264.6 399.8l0.6 -5.2M260.9 404.0l6.2 -3.7M310.3 396.1l1.4 5.2M257.1 410.5l-1.4 -3.9M313.8 445.5l-6.0 2.1M328.1 418.1l-1.9 5.3M334.1 414.7l3.2 2.7M258.0 402.1l5.8 -1.4M255.6 451.9l0.5 -5.9M304.0 388.0l4.9 6.1M296.0 387.2l3.4 5.7M328.5 449.1l-4.9 1.3M307.1 394.5l5.7 -0.8M271.0 388.3l4.9 0.8M297.2 386.9l2.9 4.8M268.2 397.7l6.1 -1.8M334.0 415.6l4.3 6.0M323.3 410.8l-1.8 6.6M258.7 412.9l-1.4 -5.0M302.5 388.8l2.5 6.8M267.1 394.7l5.7 0.6M307.9 398.8l6.2 2.2M321.0 416.2l3.4 2.6M255.1 404.0l5.9 -3.0M274.5 462.3l-2.5 -7.3M282.7 459.7l-4.4 0.8M255.3 424.3l3.7 -5.9M314.0 446.3l-6.4 0.7M268.3 437.4l-4.7 -2.9M276.5 391.4l5.5 -5.4M332.0 443.4l-4.0 2.6M329.4 430.8l-5.4 5.5M283.8 458.4l-7.6 1.6M316.6 429.9l2.5 5.6M269.7 441.8l-5.3 -3.5M258.3 418.0l-1.6 -4.1M313.7 443.7l-2.2 6.0M317.2 395.9l5.0 2.0M262.8 412.9l3.0 -3.2M306.1 396.1l4.4 0.0M294.2 383.7l4.6 6.1M299.9 460.4l-6.0 -2.6M266.0 402.1l5.5 -1.2M305.3 454.9l-4.0 -0.1M289.1 384.7l5.6 4.8M316.7 446.2l-0.2 7.2M313.0 453.0l-2.7 5.4M316.7 406.0l-1.2 4.2M303.4 463.4l-6.5 -3.8M263.0 432.2l2.1 -5.0M276.5 459.6l-3.1 -4.5M324.2 451.0l-0.4 5.6M310.0 449.7l-1.7 6.1M274.0 391.7l4.7 1.1M298.1 457.7l-4.2 -1.4M329.1 443.4l0.3 5.0M316.9 438.8l1.7 7.5M259.2 436.7l-4.5 -3.8M282.0 385.1l6.4 2.9M295.5 457.3l-6.2 3.7M325.4 417.1l5.0 4.1M260.1 446.6l-3.9 -2.1M328.0 416.3l-1.6 3.9M284.1 455.6l-7.3 2.9M260.6 450.5l-4.0 -1.9M321.4 415.1l-2.2 4.1M294.8 385.1l4.3 2.8M320.2 423.1l-3.9 5.0M269.5 444.9l-3.8 -1.7M251.0 417.6l-1.8 -6.8M324.6 408.8l4.4 2.9M272.8 455.6l-1.2 -6.5M270.2 394.1l7.3 0.4M301.0 455.2l-4.5 3.5M262.4 396.6l7.7 -0.3M281.5 462.2l-3.0 -3.4M269.5 393.7l6.4 1.0M321.8 434.2l1.4 5.8M323.8 418.2l-3.9 5.2M332.3 417.2l-3.2 6.0" stroke="#b8854f" stroke-width="0.8" fill="none" opacity="0.95"/>
<path d="M264.8 422.6a26.3 33.5 0 1 0 52.6 0a26.3 33.5 0 1 0 -52.6 0ZM258.6 423.4a32.8 36.3 0 1 0 65.6 0a32.8 36.3 0 1 0 -65.6 0ZM252.5 424.1a39.3 39.0 0 1 0 78.6 0a39.3 39.0 0 1 0 -78.6 0ZM248.4 424.7a43.7 40.9 0 1 0 87.4 0a43.7 40.9 0 1 0 -87.4 0Z" stroke="#a87446" stroke-width="0.6" fill="none" opacity="0.8"/>
<path d="M182.0 422.0a25.0 33.0 0 1 0 50.0 0a25.0 33.0 0 1 0 -50.0 0Z" stroke="none" stroke-width="0" fill="#030303" />
<path d="M228.0 423.7L231.5 423.6M227.7 426.0L230.9 428.9M227.0 428.2L229.7 434.1M226.0 430.3L227.9 438.9M224.6 432.1L225.6 443.2M223.0 433.8L222.7 447.0M221.1 435.1L219.4 450.1M219.0 436.1L215.7 452.4M216.8 436.7L211.8 453.9M214.5 437.0L207.8 454.5M212.1 436.9L203.8 454.2M209.9 436.4L199.8 453.1M207.7 435.5L196.0 451.1M205.8 434.3L192.6 448.3M204.0 432.8L189.5 444.8M202.5 431.0L186.9 440.7M201.4 429.0L184.9 436.0M200.5 426.9L183.5 431.0M200.1 424.6L182.7 425.7M200.0 422.3L182.5 420.4M200.3 420.0L183.1 415.1M201.0 417.8L184.3 409.9M202.0 415.7L186.1 405.1M203.4 413.9L188.4 400.8M205.0 412.2L191.3 397.0M206.9 410.9L194.6 393.9M209.0 409.9L198.3 391.6M211.2 409.3L202.2 390.1M213.5 409.0L206.2 389.5M215.9 409.1L210.2 389.8M218.1 409.6L214.2 390.9M220.3 410.5L218.0 392.9M222.2 411.7L221.4 395.7M224.0 413.2L224.5 399.2M225.5 415.0L227.1 403.3M226.6 417.0L229.1 408.0M227.5 419.1L230.5 413.0M227.9 421.4L231.3 418.3" stroke="#f0f0f0" stroke-width="0.8" fill="none"/>
<circle cx="214" cy="423" r="13" fill="none" stroke="#e89a3a" stroke-width="3.4"/>
<circle cx="214" cy="423" r="13.6" fill="none" stroke="#f5c070" stroke-width="1" opacity="0.6"/>
<circle cx="214" cy="423" r="11.3" fill="url(#pupil)"/>
<ellipse cx="222.5" cy="419.5" rx="3.2" ry="3.3" fill="#dcdcdc"/>
<path d="M266.0 422.0a25.0 33.0 0 1 0 50.0 0a25.0 33.0 0 1 0 -50.0 0Z" stroke="none" stroke-width="0" fill="#030303" />
<path d="M298.0 423.7L315.5 423.6M297.7 426.0L314.9 428.9M297.0 428.2L313.7 434.1M296.0 430.3L311.9 438.9M294.6 432.1L309.6 443.2M293.0 433.8L306.7 447.0M291.1 435.1L303.4 450.1M289.0 436.1L299.7 452.4M286.8 436.7L295.8 453.9M284.5 437.0L291.8 454.5M282.1 436.9L287.8 454.2M279.9 436.4L283.8 453.1M277.7 435.5L280.0 451.1M275.8 434.3L276.6 448.3M274.0 432.8L273.5 444.8M272.5 431.0L270.9 440.7M271.4 429.0L268.9 436.0M270.5 426.9L267.5 431.0M270.1 424.6L266.7 425.7M270.0 422.3L266.5 420.4M270.3 420.0L267.1 415.1M271.0 417.8L268.3 409.9M272.0 415.7L270.1 405.1M273.4 413.9L272.4 400.8M275.0 412.2L275.3 397.0M276.9 410.9L278.6 393.9M279.0 409.9L282.3 391.6M281.2 409.3L286.2 390.1M283.5 409.0L290.2 389.5M285.9 409.1L294.2 389.8M288.1 409.6L298.2 390.9M290.3 410.5L302.0 392.9M292.2 411.7L305.4 395.7M294.0 413.2L308.5 399.2M295.5 415.0L311.1 403.3M296.6 417.0L313.1 408.0M297.5 419.1L314.5 413.0M297.9 421.4L315.3 418.3" stroke="#f0f0f0" stroke-width="0.8" fill="none"/>
<circle cx="284" cy="423" r="13" fill="none" stroke="#e89a3a" stroke-width="3.4"/>
<circle cx="284" cy="423" r="13.6" fill="none" stroke="#f5c070" stroke-width="1" opacity="0.6"/>
<circle cx="284" cy="423" r="11.3" fill="url(#pupil)"/>
<ellipse cx="292" cy="419.5" rx="3.2" ry="3.3" fill="#dcdcdc"/>
<path d="M249 424.5 C256 428 259 440 257.5 452 C256.5 462 252 470 249 476 C246 470 241.5 462 240.5 452 C239 440 242 428 249 424.5Z" fill="#2c2c2c" stroke="#0a0a0a" stroke-width="1"/>
<path d="M249 416 L249 425" stroke="#050505" stroke-width="2.5" fill="none"/>
<path d="M249 432 Q252 450 249 468M246 438 Q247 452 249 466M252 438 Q251 452 249 466" stroke="#444" stroke-width="0.6" fill="none"/>
<path d="M217.6 613.5 C210.6 617 210.1 630 215.6 640.0 C217.1 632.0 221.1 626 221.1 619 C221.1 615 219.6 613 217.6 613.5Z" fill="#383838" stroke="#1c1c1c" stroke-width="0.7"/>
<path d="M216.6 618 Q213.6 625 215.6 634.0" stroke="#5a5a5a" stroke-width="1" fill="none"/>
<path d="M225.5 613.5 C218.5 617 218.0 630 223.5 644.0 C225.0 636.0 229.0 626 229.0 619 C229.0 615 227.5 613 225.5 613.5Z" fill="#383838" stroke="#1c1c1c" stroke-width="0.7"/>
<path d="M224.5 618 Q221.5 625 223.5 638.0" stroke="#5a5a5a" stroke-width="1" fill="none"/>
<path d="M233.0 613.5 C226.0 617 225.5 630 231.0 639.0 C232.5 631.0 236.5 626 236.5 619 C236.5 615 235.0 613 233.0 613.5Z" fill="#383838" stroke="#1c1c1c" stroke-width="0.7"/>
<path d="M232.0 618 Q229.0 625 231.0 633.0" stroke="#5a5a5a" stroke-width="1" fill="none"/>
<path d="M268.5 613.5 C275.5 617 276.0 630 270.5 639.0 C269.0 631.0 265.0 626 265.0 619 C265.0 615 266.5 613 268.5 613.5Z" fill="#383838" stroke="#1c1c1c" stroke-width="0.7"/>
<path d="M269.5 618 Q272.5 625 270.5 633.0" stroke="#5a5a5a" stroke-width="1" fill="none"/>
<path d="M276.5 613.5 C283.5 617 284.0 630 278.5 644.0 C277.0 636.0 273.0 626 273.0 619 C273.0 615 274.5 613 276.5 613.5Z" fill="#383838" stroke="#1c1c1c" stroke-width="0.7"/>
<path d="M277.5 618 Q280.5 625 278.5 638.0" stroke="#5a5a5a" stroke-width="1" fill="none"/>
<path d="M285.0 613.5 C292.0 617 292.5 630 287.0 640.0 C285.5 632.0 281.5 626 281.5 619 C281.5 615 283.0 613 285.0 613.5Z" fill="#383838" stroke="#1c1c1c" stroke-width="0.7"/>
<path d="M286.0 618 Q289.0 625 287.0 634.0" stroke="#5a5a5a" stroke-width="1" fill="none"/></g>
<rect x="235" y="116" width="2" height="680" fill="#18c818"/>
<rect x="13" y="414.7" width="501.5" height="1.6" fill="#18c818"/>
<rect x="223.8" y="116" width="1.6" height="680" fill="#ff1010"/>
<rect x="13" y="412.7" width="501.5" height="1.4" fill="#ff1010"/>
<path d="M242 126 V119 L239.8 120.8" stroke="#3cd23c" stroke-width="1.3" fill="none"/>
<path d="M18 412.6 V405.8 L16.6 407.1" stroke="#38d038" stroke-width="1.3" fill="none"/>
<g fill="#000"><rect x="18" y="51" width="1" height="23" fill="#1c0c10"/><rect x="21" y="51" width="1" height="23" fill="#1c0c10"/><rect x="22" y="51" width="1" height="23" fill="#1c0c10"/><rect x="23" y="51" width="1" height="23" fill="#1c0c10"/><rect x="24" y="51" width="1" height="23" fill="#000"/><rect x="25" y="51" width="1" height="23" fill="#1c0c10"/><rect x="26" y="51" width="1" height="23" fill="#3a64c0"/><rect x="27" y="51" width="1" height="23" fill="#d89040"/><rect x="28" y="51" width="1" height="23" fill="#000"/><rect x="29" y="51" width="1" height="23" fill="#000"/><rect x="30" y="51" width="1" height="23" fill="#000"/><rect x="31" y="51" width="1" height="23" fill="#90c890"/><rect x="32" y="51" width="1" height="23" fill="#3a64c0"/><rect x="33" y="51" width="1" height="23" fill="#000"/><rect x="36" y="51" width="1" height="23" fill="#3a64c0"/><rect x="38" y="51" width="1" height="23" fill="#000"/><rect x="39" y="51" width="1" height="23" fill="#000"/><rect x="40" y="51" width="1" height="23" fill="#1c0c10"/><rect x="41" y="51" width="1" height="23" fill="#000"/><rect x="42" y="51" width="1" height="23" fill="#000"/><rect x="43" y="51" width="1" height="23" fill="#000"/><rect x="44" y="51" width="1" height="23" fill="#000"/><rect x="45" y="51" width="1" height="23" fill="#1c0c10"/><rect x="46" y="51" width="1" height="23" fill="#000"/><rect x="47" y="51" width="1" height="23" fill="#90c890"/><rect x="48" y="51" width="1" height="23" fill="#1c0c10"/><rect x="49" y="51" width="1" height="23" fill="#3a64c0"/><rect x="51" y="51" width="1" height="23" fill="#3a64c0"/><rect x="52" y="51" width="1" height="23" fill="#1c0c10"/><rect x="53" y="51" width="1" height="23" fill="#000"/><rect x="56" y="51" width="1" height="23" fill="#90c890"/><rect x="57" y="51" width="1" height="23" fill="#d89040"/><rect x="58" y="51" width="1" height="23" fill="#000"/><rect x="59" y="51" width="1" height="23" fill="#000"/><rect x="61" y="51" width="1" height="23" fill="#000"/><rect x="62" y="51" width="1" height="23" fill="#d89040"/><rect x="63" y="51" width="1" height="23" fill="#000"/><rect x="64" y="51" width="1" height="23" fill="#90c890"/><rect x="65" y="51" width="1" height="23" fill="#000"/><rect x="67" y="51" width="1" height="23" fill="#90c890"/><rect x="68" y="51" width="1" height="23" fill="#000"/><rect x="69" y="51" width="1" height="23" fill="#000"/><rect x="70" y="51" width="1" height="23" fill="#5a3a80"/><rect x="71" y="51" width="1" height="23" fill="#1c0c10"/><rect x="73" y="51" width="1" height="23" fill="#000"/><rect x="74" y="51" width="1" height="23" fill="#000"/><rect x="75" y="51" width="1" height="23" fill="#3a64c0"/><rect x="76" y="51" width="1" height="23" fill="#d89040"/><rect x="77" y="51" width="1" height="23" fill="#000"/><rect x="78" y="51" width="1" height="23" fill="#000"/><rect x="79" y="51" width="1" height="23" fill="#000"/><rect x="81" y="51" width="1" height="23" fill="#d89040"/><rect x="82" y="51" width="1" height="23" fill="#000"/><rect x="83" y="51" width="1" height="23" fill="#000"/><rect x="84" y="51" width="1" height="23" fill="#000"/><rect x="85" y="51" width="1" height="23" fill="#000"/><rect x="86" y="51" width="1" height="23" fill="#d89040"/><rect x="87" y="51" width="1" height="23" fill="#000"/><rect x="88" y="51" width="1" height="23" fill="#1c0c10"/><rect x="89" y="51" width="1" height="23" fill="#000"/><rect x="90" y="51" width="1" height="23" fill="#000"/><rect x="91" y="51" width="1" height="23" fill="#d89040"/><rect x="92" y="51" width="1" height="23" fill="#000"/><rect x="93" y="51" width="1" height="23" fill="#3a64c0"/><rect x="94" y="51" width="1" height="23" fill="#000"/><rect x="95" y="51" width="1" height="23" fill="#000"/><rect x="96" y="51" width="1" height="23" fill="#000"/><rect x="99" y="51" width="1" height="23" fill="#90c890"/><rect x="100" y="51" width="1" height="23" fill="#000"/><rect x="101" y="51" width="1" height="23" fill="#5a3a80"/><rect x="102" y="51" width="1" height="23" fill="#000"/><rect x="103" y="51" width="1" height="23" fill="#000"/><rect x="104" y="51" width="1" height="23" fill="#90c890"/><rect x="105" y="51" width="1" height="23" fill="#3a64c0"/><rect x="106" y="51" width="1" height="23" fill="#000"/><rect x="108" y="51" width="1" height="23" fill="#000"/><rect x="109" y="51" width="1" height="23" fill="#000"/><rect x="110" y="51" width="1" height="23" fill="#d89040"/><rect x="111" y="51" width="1" height="23" fill="#000"/><rect x="112" y="51" width="1" height="23" fill="#000"/><rect x="113" y="51" width="1" height="23" fill="#000"/><rect x="114" y="51" width="1" height="23" fill="#000"/><rect x="115" y="51" width="1" height="23" fill="#1c0c10"/><rect x="116" y="51" width="1" height="23" fill="#000"/><rect x="117" y="51" width="1" height="23" fill="#3a64c0"/><rect x="119" y="51" width="1" height="23" fill="#1c0c10"/><rect x="121" y="51" width="1" height="23" fill="#1c0c10"/><rect x="122" y="51" width="1" height="23" fill="#1c0c10"/><rect x="123" y="51" width="1" height="23" fill="#5a3a80"/><rect x="124" y="51" width="1" height="23" fill="#000"/><rect x="125" y="51" width="1" height="23" fill="#000"/><rect x="126" y="51" width="1" height="23" fill="#5a3a80"/><rect x="127" y="51" width="1" height="23" fill="#90c890"/><rect x="128" y="51" width="1" height="23" fill="#000"/><rect x="129" y="51" width="1" height="23" fill="#000"/><rect x="130" y="51" width="1" height="23" fill="#d89040"/><rect x="132" y="51" width="1" height="23" fill="#000"/><rect x="134" y="51" width="1" height="23" fill="#5a3a80"/><rect x="135" y="51" width="1" height="23" fill="#3a64c0"/><rect x="136" y="51" width="1" height="23" fill="#000"/><rect x="137" y="51" width="1" height="23" fill="#000"/><rect x="138" y="51" width="1" height="23" fill="#000"/><rect x="140" y="51" width="1" height="23" fill="#000"/><rect x="141" y="51" width="1" height="23" fill="#d89040"/><rect x="142" y="51" width="1" height="23" fill="#000"/><rect x="143" y="51" width="1" height="23" fill="#90c890"/><rect x="144" y="51" width="1" height="23" fill="#1c0c10"/><rect x="145" y="51" width="1" height="23" fill="#000"/><rect x="146" y="51" width="1" height="23" fill="#000"/><rect x="147" y="51" width="1" height="23" fill="#d89040"/><rect x="148" y="51" width="1" height="23" fill="#000"/><rect x="149" y="51" width="1" height="23" fill="#000"/><rect x="151" y="51" width="1" height="23" fill="#90c890"/><rect x="152" y="51" width="1" height="23" fill="#3a64c0"/><rect x="153" y="51" width="1" height="23" fill="#000"/><rect x="154" y="51" width="1" height="23" fill="#5a3a80"/><rect x="155" y="51" width="1" height="23" fill="#000"/><rect x="156" y="51" width="1" height="23" fill="#000"/><rect x="157" y="51" width="1" height="23" fill="#000"/><rect x="158" y="51" width="1" height="23" fill="#000"/><rect x="159" y="51" width="1" height="23" fill="#000"/><rect x="160" y="51" width="1" height="23" fill="#000"/><rect x="161" y="51" width="1" height="23" fill="#000"/><rect x="162" y="51" width="1" height="23" fill="#1c0c10"/><rect x="163" y="51" width="1" height="23" fill="#000"/><rect x="164" y="51" width="1" height="23" fill="#000"/><rect x="165" y="51" width="1" height="23" fill="#5a3a80"/><rect x="167" y="51" width="1" height="23" fill="#3a64c0"/><rect x="168" y="51" width="1" height="23" fill="#3a64c0"/><rect x="169" y="51" width="1" height="23" fill="#1c0c10"/><rect x="170" y="51" width="1" height="23" fill="#000"/><rect x="171" y="51" width="1" height="23" fill="#000"/><rect x="172" y="51" width="1" height="23" fill="#000"/><rect x="173" y="51" width="1" height="23" fill="#5a3a80"/><rect x="174" y="51" width="1" height="23" fill="#d89040"/><rect x="176" y="51" width="1" height="23" fill="#000"/><rect x="177" y="51" width="1" height="23" fill="#3a64c0"/><rect x="178" y="51" width="1" height="23" fill="#1c0c10"/><rect x="179" y="51" width="1" height="23" fill="#d89040"/><rect x="180" y="51" width="1" height="23" fill="#000"/><rect x="182" y="51" width="1" height="23" fill="#000"/><rect x="183" y="51" width="1" height="23" fill="#1c0c10"/><rect x="184" y="51" width="1" height="23" fill="#d89040"/><rect x="185" y="51" width="1" height="23" fill="#5a3a80"/><rect x="186" y="51" width="1" height="23" fill="#d89040"/><rect x="187" y="51" width="1" height="23" fill="#d89040"/><rect x="188" y="51" width="1" height="23" fill="#d89040"/><rect x="189" y="51" width="1" height="23" fill="#5a3a80"/><rect x="190" y="51" width="1" height="23" fill="#000"/><rect x="191" y="51" width="1" height="23" fill="#3a64c0"/><rect x="192" y="51" width="1" height="23" fill="#5a3a80"/><rect x="193" y="51" width="1" height="23" fill="#5a3a80"/><rect x="194" y="51" width="1" height="23" fill="#000"/><rect x="195" y="51" width="1" height="23" fill="#d89040"/><rect x="196" y="51" width="1" height="23" fill="#5a3a80"/><rect x="197" y="51" width="1" height="23" fill="#1c0c10"/><rect x="198" y="51" width="1" height="23" fill="#3a64c0"/><rect x="199" y="51" width="1" height="23" fill="#000"/><rect x="200" y="51" width="1" height="23" fill="#1c0c10"/><rect x="201" y="51" width="1" height="23" fill="#3a64c0"/><rect x="202" y="51" width="1" height="23" fill="#000"/><rect x="203" y="51" width="1" height="23" fill="#3a64c0"/><rect x="205" y="51" width="1" height="23" fill="#5a3a80"/><rect x="206" y="51" width="1" height="23" fill="#d89040"/><rect x="207" y="51" width="1" height="23" fill="#000"/><rect x="208" y="51" width="1" height="23" fill="#d89040"/><rect x="209" y="51" width="1" height="23" fill="#1c0c10"/><rect x="210" y="51" width="1" height="23" fill="#000"/><rect x="211" y="51" width="1" height="23" fill="#90c890"/><rect x="213" y="51" width="1" height="23" fill="#d89040"/><rect x="214" y="51" width="1" height="23" fill="#000"/><rect x="215" y="51" width="1" height="23" fill="#3a64c0"/><rect x="216" y="51" width="1" height="23" fill="#1c0c10"/><rect x="217" y="51" width="1" height="23" fill="#000"/><rect x="218" y="51" width="1" height="23" fill="#3a64c0"/><rect x="219" y="51" width="1" height="23" fill="#1c0c10"/><rect x="220" y="51" width="1" height="23" fill="#3a64c0"/><rect x="222" y="51" width="1" height="23" fill="#000"/><rect x="223" y="51" width="1" height="23" fill="#000"/><rect x="224" y="51" width="1" height="23" fill="#000"/><rect x="225" y="51" width="1" height="23" fill="#3a64c0"/><rect x="226" y="51" width="1" height="23" fill="#000"/><rect x="227" y="51" width="1" height="23" fill="#000"/><rect x="228" y="51" width="1" height="23" fill="#5a3a80"/><rect x="229" y="51" width="1" height="23" fill="#3a64c0"/><rect x="230" y="51" width="1" height="23" fill="#000"/><rect x="231" y="51" width="1" height="23" fill="#5a3a80"/><rect x="232" y="51" width="1" height="23" fill="#000"/><rect x="233" y="51" width="1" height="23" fill="#3a64c0"/><rect x="234" y="51" width="1" height="23" fill="#000"/><rect x="235" y="51" width="1" height="23" fill="#000"/><rect x="236" y="51" width="1" height="23" fill="#90c890"/><rect x="237" y="51" width="1" height="23" fill="#5a3a80"/><rect x="238" y="51" width="1" height="23" fill="#5a3a80"/><rect x="239" y="51" width="1" height="23" fill="#000"/><rect x="241" y="51" width="1" height="23" fill="#000"/><rect x="242" y="51" width="1" height="23" fill="#000"/><rect x="243" y="51" width="1" height="23" fill="#1c0c10"/><rect x="244" y="51" width="1" height="23" fill="#90c890"/><rect x="245" y="51" width="1" height="23" fill="#90c890"/><rect x="246" y="51" width="1" height="23" fill="#d89040"/><rect x="248" y="51" width="1" height="23" fill="#000"/><rect x="249" y="51" width="1" height="23" fill="#000"/><rect x="250" y="51" width="1" height="23" fill="#1c0c10"/><rect x="251" y="51" width="1" height="23" fill="#000"/><rect x="252" y="51" width="1" height="23" fill="#000"/><rect x="253" y="51" width="1" height="23" fill="#000"/><rect x="254" y="51" width="1" height="23" fill="#3a64c0"/><rect x="255" y="51" width="1" height="23" fill="#1c0c10"/><rect x="256" y="51" width="1" height="23" fill="#000"/><rect x="257" y="51" width="1" height="23" fill="#90c890"/><rect x="259" y="51" width="1" height="23" fill="#1c0c10"/><rect x="260" y="51" width="1" height="23" fill="#000"/><rect x="261" y="51" width="1" height="23" fill="#000"/><rect x="262" y="51" width="1" height="23" fill="#5a3a80"/><rect x="263" y="51" width="1" height="23" fill="#000"/><rect x="264" y="51" width="1" height="23" fill="#d89040"/><rect x="265" y="51" width="1" height="23" fill="#1c0c10"/></g>
<rect x="550.5" y="409.3" width="32.5" height="10.8" fill="#ffffff" stroke="#000" stroke-width="1"/><rect x="550.5" y="424.7" width="32.5" height="10.8" fill="#f7a03a" stroke="#000" stroke-width="1"/><rect x="550.5" y="440.1" width="32.5" height="10.8" fill="#a0683a" stroke="#000" stroke-width="1"/><rect x="550.5" y="455.5" width="32.5" height="10.8" fill="#000000" stroke="#000" stroke-width="1"/><rect x="550.5" y="470.9" width="32.5" height="10.8" fill="#ffffff" stroke="#000" stroke-width="1"/>
<g fill="#000">
<rect x="12" y="13" width="1.1" height="783"/>
<rect x="12" y="12.8" width="727.5" height="1.3"/>
<rect x="737.9" y="13" width="1.9" height="783"/>
<rect x="12" y="115.7" width="727" height="1.3"/>
<rect x="613.8" y="13" width="1.1" height="103"/>
<rect x="513.9" y="116" width="1.4" height="680"/>
<rect x="514" y="376" width="225" height="1.4"/>
<rect x="514" y="484" width="225" height="1.3"/>
</g>
</svg>
<div class="t" style="left:16.0px;top:15.11px;font-size:17px;line-height:17px;color:#000;">Технологическая карта</div>
<div class="t" style="left:15.0px;top:37.69px;font-size:11px;line-height:11px;color:#000;">Wilcom EmbroideryStudio - Designing</div>
<div class="t" style="left:15.0px;top:81.39px;font-size:11px;line-height:11px;color:#000;">Дизайн:</div>
<div class="t" style="left:75.3px;top:80.61px;font-size:17px;line-height:17px;color:#000;letter-spacing:-0.15px;">EMBROIDERYAI-SM-SOV</div>
<div class="t" style="left:15.0px;top:103.09px;font-size:11px;line-height:11px;color:#000;">Заголовок</div>
<div class="t" style="left:617.5px;top:16.59px;font-size:11px;line-height:11px;color:#000;">Стежки:</div>
<div class="t" style="left:681.0px;top:16.59px;font-size:11px;line-height:11px;color:#000;">13 852</div>
<div class="t" style="left:617.5px;top:31.77px;font-size:11px;line-height:11px;color:#000;">Высота:</div>
<div class="t" style="left:681.0px;top:31.77px;font-size:11px;line-height:11px;color:#000;">262.1 мм</div>
<div class="t" style="left:617.5px;top:46.95px;font-size:11px;line-height:11px;color:#000;">Ширина:</div>
<div class="t" style="left:681.0px;top:46.95px;font-size:11px;line-height:11px;color:#000;">180.1 мм</div>
<div class="t" style="left:617.5px;top:62.13px;font-size:11px;line-height:11px;color:#000;">Цвета:</div>
<div class="t" style="left:681.0px;top:62.13px;font-size:11px;line-height:11px;color:#000;">4</div>
<div class="t" style="left:617.5px;top:77.31px;font-size:11px;line-height:11px;color:#000;">Цветоряд:</div>
<div class="t" style="left:681.0px;top:77.31px;font-size:11px;line-height:11px;color:#000;">Colorway 1</div>
<div class="t" style="left:617.5px;top:92.49px;font-size:11px;line-height:11px;color:#000;">Увеличить:</div>
<div class="t" style="left:681.0px;top:92.49px;font-size:11px;line-height:11px;color:#000;">0.42</div>
<div class="t" style="left:517.6px;top:119.39px;font-size:11px;line-height:11px;color:#000;">Машинный формат:</div>
<div class="t" style="left:627.2px;top:119.39px;font-size:11px;line-height:11px;color:#000;">Tajima TBF</div>
<div class="t" style="left:517.6px;top:134.72px;font-size:11px;line-height:11px;color:#000;">Смены цвета:</div>
<div class="t" style="left:627.2px;top:134.72px;font-size:11px;line-height:11px;color:#000;">4</div>
<div class="t" style="left:517.6px;top:150.05px;font-size:11px;line-height:11px;color:#000;">Остановы:</div>
<div class="t" style="left:627.2px;top:150.05px;font-size:11px;line-height:11px;color:#000;">5</div>
<div class="t" style="left:517.6px;top:165.38px;font-size:11px;line-height:11px;color:#000;">Обрезки:</div>
<div class="t" style="left:627.2px;top:165.38px;font-size:11px;line-height:11px;color:#000;">74</div>
<div class="t" style="left:517.6px;top:180.71px;font-size:11px;line-height:11px;color:#000;">Аппликации:</div>
<div class="t" style="left:627.2px;top:180.71px;font-size:11px;line-height:11px;color:#000;">0</div>
<div class="t" style="left:517.6px;top:196.04px;font-size:11px;line-height:11px;color:#000;">Влево:</div>
<div class="t" style="left:627.2px;top:196.04px;font-size:11px;line-height:11px;color:#000;">77.8 мм</div>
<div class="t" style="left:517.6px;top:211.37px;font-size:11px;line-height:11px;color:#000;">Правое:</div>
<div class="t" style="left:627.2px;top:211.37px;font-size:11px;line-height:11px;color:#000;">102.2 мм</div>
<div class="t" style="left:517.6px;top:226.70px;font-size:11px;line-height:11px;color:#000;">Верхних край:</div>
<div class="t" style="left:627.2px;top:226.70px;font-size:11px;line-height:11px;color:#000;">63.8 мм</div>
<div class="t" style="left:517.6px;top:242.03px;font-size:11px;line-height:11px;color:#000;">Нижний край:</div>
<div class="t" style="left:627.2px;top:242.03px;font-size:11px;line-height:11px;color:#000;">198.4 мм</div>
<div class="t" style="left:517.6px;top:257.36px;font-size:11px;line-height:11px;color:#000;">Конец X:</div>
<div class="t" style="left:627.2px;top:257.36px;font-size:11px;line-height:11px;color:#000;">-7.7 мм</div>
<div class="t" style="left:517.6px;top:272.69px;font-size:11px;line-height:11px;color:#000;">Конец Y:</div>
<div class="t" style="left:627.2px;top:272.69px;font-size:11px;line-height:11px;color:#000;">1.7 мм</div>
<div class="t" style="left:517.6px;top:288.02px;font-size:11px;line-height:11px;color:#000;">Область</div>
<div class="t" style="left:627.2px;top:288.02px;font-size:11px;line-height:11px;color:#000;">47202.4 кв.мм</div>
<div class="t" style="left:517.6px;top:303.35px;font-size:11px;line-height:11px;color:#000;">Макс. стежок:</div>
<div class="t" style="left:627.2px;top:303.35px;font-size:11px;line-height:11px;color:#000;">8.3 мм</div>
<div class="t" style="left:517.6px;top:318.68px;font-size:11px;line-height:11px;color:#000;">Мин. стежок:</div>
<div class="t" style="left:627.2px;top:318.68px;font-size:11px;line-height:11px;color:#000;">0.2 мм</div>
<div class="t" style="left:517.6px;top:334.01px;font-size:11px;line-height:11px;color:#000;">Макс. скачок:</div>
<div class="t" style="left:627.2px;top:334.01px;font-size:11px;line-height:11px;color:#000;">7.0 мм</div>
<div class="t" style="left:517.6px;top:349.34px;font-size:11px;line-height:11px;color:#000;">Всего нити:</div>
<div class="t" style="left:627.2px;top:349.34px;font-size:11px;line-height:11px;color:#000;">81.95м</div>
<div class="t" style="left:517.6px;top:364.67px;font-size:11px;line-height:11px;color:#000;">Всего шпулечной:</div>
<div class="t" style="left:627.2px;top:364.67px;font-size:11px;line-height:11px;color:#000;">31.85м</div>
<div class="t" style="left:517.6px;top:380.39px;font-size:11px;line-height:11px;color:#000;">Стоп последовательность:</div>
<div class="t" style="left:517.4px;top:394.69px;font-size:11px;line-height:11px;color:#000;text-decoration:underline;">#</div>
<div class="t" style="left:532.0px;top:394.69px;font-size:11px;line-height:11px;color:#000;text-decoration:underline;">N#</div>
<div class="t" style="left:552.2px;top:394.69px;font-size:11px;line-height:11px;color:#000;text-decoration:underline;">Цвет</div>
<div class="t" style="left:586.7px;top:394.69px;font-size:11px;line-height:11px;color:#000;text-decoration:underline;">Стежки</div>
<div class="t" style="left:632.4px;top:394.69px;font-size:11px;line-height:11px;color:#000;text-decoration:underline;">Код</div>
<div class="t" style="left:658.0px;top:394.69px;font-size:11px;line-height:11px;color:#000;text-decoration:underline;">Имя</div>
<div class="t" style="left:700.5px;top:394.69px;font-size:11px;line-height:11px;color:#000;text-decoration:underline;">Карта</div>
<div class="t" style="left:517.2px;top:409.99px;font-size:11px;line-height:11px;color:#000;">1.</div>
<div class="t" style="left:532.0px;top:409.99px;font-size:11px;line-height:11px;color:#000;">9</div>
<div class="t" style="right:128.0px;top:409.99px;font-size:11px;line-height:11px;">2 455</div>
<div class="t" style="right:101.5px;top:409.99px;font-size:11px;line-height:11px;">9</div>
<div class="t" style="left:658.0px;top:409.99px;font-size:11px;line-height:11px;color:#000;">White</div>
<div class="t" style="left:700.5px;top:409.99px;font-size:11px;line-height:11px;color:#000;">Default</div>
<div class="t" style="left:517.2px;top:425.39px;font-size:11px;line-height:11px;color:#000;">2.</div>
<div class="t" style="left:532.0px;top:425.39px;font-size:11px;line-height:11px;color:#000;">12</div>
<div class="t" style="right:128.0px;top:425.39px;font-size:11px;line-height:11px;">3 460</div>
<div class="t" style="right:101.5px;top:425.39px;font-size:11px;line-height:11px;">12</div>
<div class="t" style="left:658.0px;top:425.39px;font-size:11px;line-height:11px;color:#000;">Orange</div>
<div class="t" style="left:700.5px;top:425.39px;font-size:11px;line-height:11px;color:#000;">Default</div>
<div class="t" style="left:517.2px;top:440.79px;font-size:11px;line-height:11px;color:#000;">3.</div>
<div class="t" style="left:532.0px;top:440.79px;font-size:11px;line-height:11px;color:#000;">14</div>
<div class="t" style="right:128.0px;top:440.79px;font-size:11px;line-height:11px;">6 192</div>
<div class="t" style="right:101.5px;top:440.79px;font-size:11px;line-height:11px;">14</div>
<div class="t" style="left:658.0px;top:440.79px;font-size:11px;line-height:11px;color:#000;">Brown</div>
<div class="t" style="left:700.5px;top:440.79px;font-size:11px;line-height:11px;color:#000;">Default</div>
<div class="t" style="left:517.2px;top:456.19px;font-size:11px;line-height:11px;color:#000;">4.</div>
<div class="t" style="left:532.0px;top:456.19px;font-size:11px;line-height:11px;color:#000;">8</div>
<div class="t" style="right:128.0px;top:456.19px;font-size:11px;line-height:11px;">1 607</div>
<div class="t" style="right:101.5px;top:456.19px;font-size:11px;line-height:11px;">8</div>
<div class="t" style="left:658.0px;top:456.19px;font-size:11px;line-height:11px;color:#000;">Black</div>
<div class="t" style="left:700.5px;top:456.19px;font-size:11px;line-height:11px;color:#000;">Default</div>
<div class="t" style="left:517.2px;top:471.59px;font-size:11px;line-height:11px;color:#000;">5.</div>
<div class="t" style="left:532.0px;top:471.59px;font-size:11px;line-height:11px;color:#000;">9</div>
<div class="t" style="right:128.0px;top:471.59px;font-size:11px;line-height:11px;">137</div>
<div class="t" style="right:101.5px;top:471.59px;font-size:11px;line-height:11px;">9</div>
<div class="t" style="left:658.0px;top:471.59px;font-size:11px;line-height:11px;color:#000;">White</div>
<div class="t" style="left:700.5px;top:471.59px;font-size:11px;line-height:11px;color:#000;">Default</div>

<div class="t" style="left:505.6px;top:403.3px;font-size:10px;line-height:10px;color:#ff1010;-webkit-text-stroke:0.3px #ff1010">2</div>
</body></html>
